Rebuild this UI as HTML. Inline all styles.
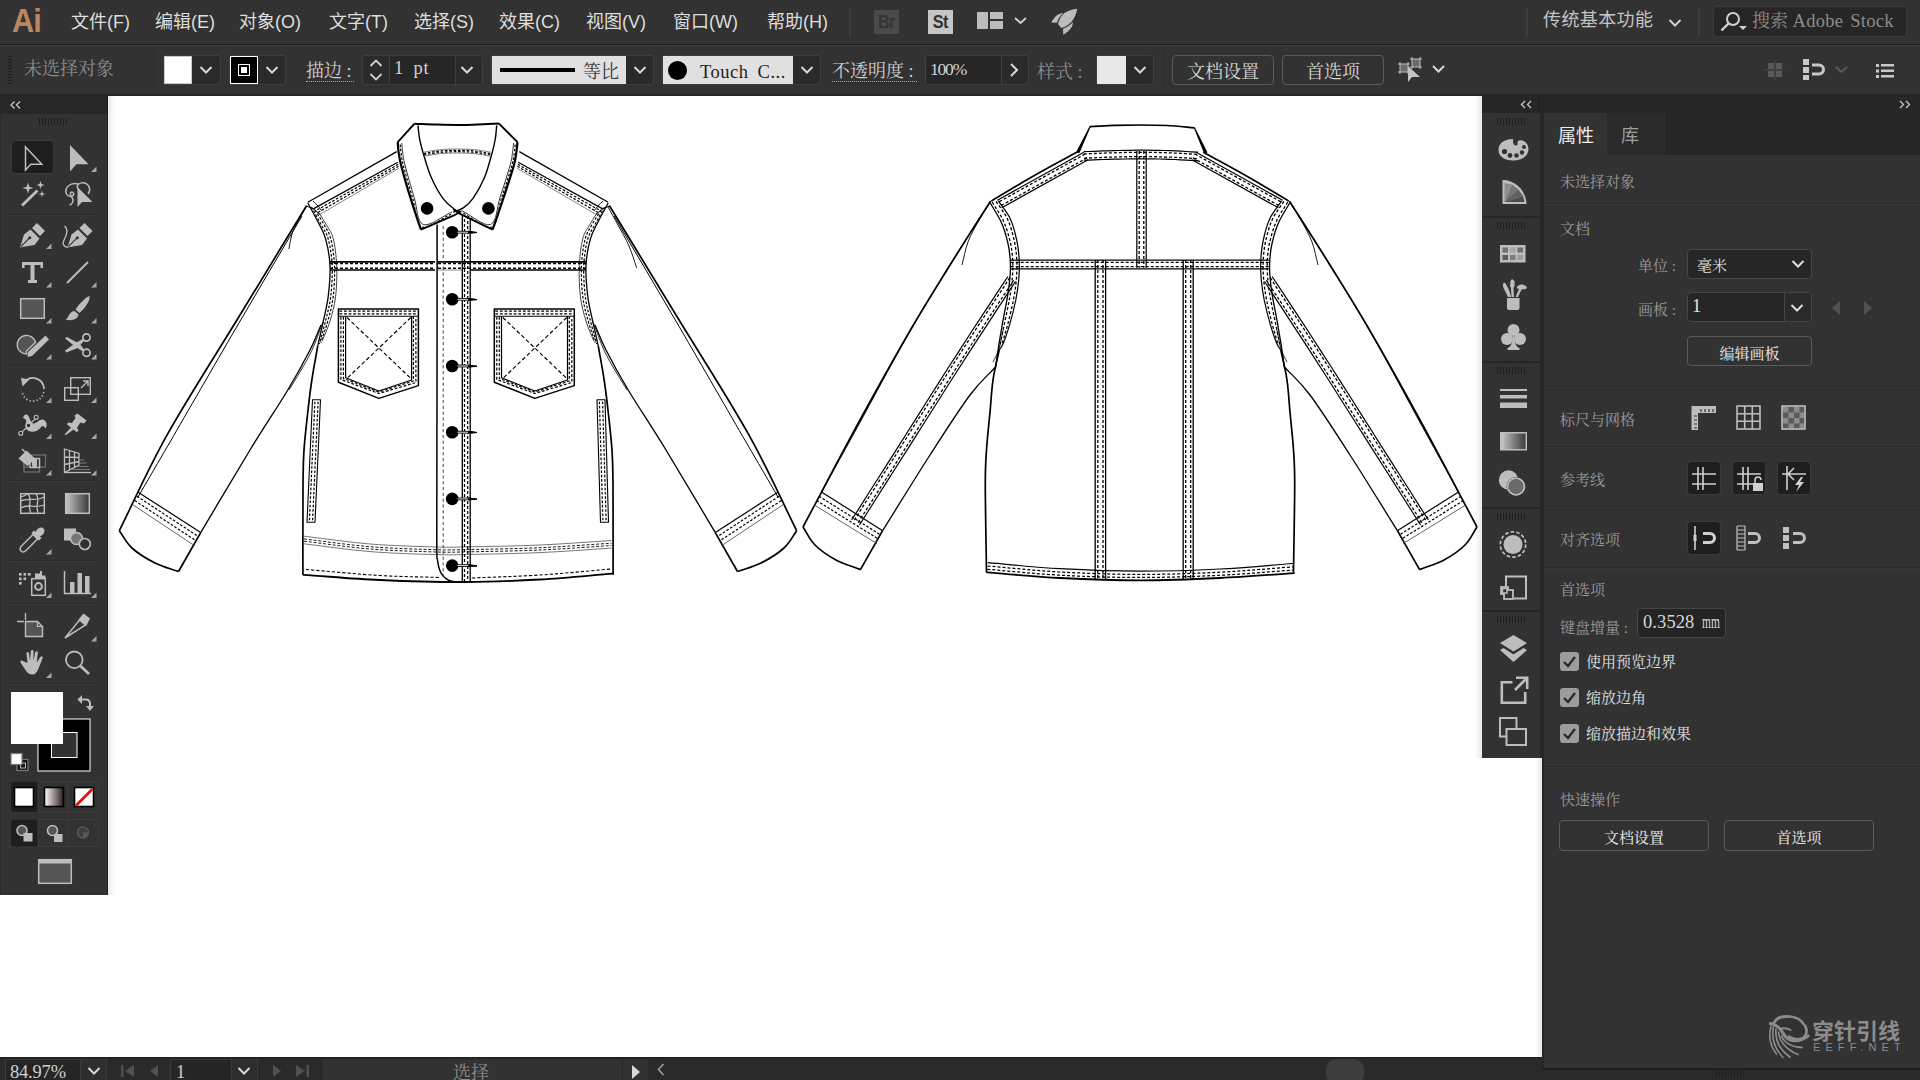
<!DOCTYPE html>
<html lang="zh-CN">
<head>
<meta charset="utf-8">
<title>Adobe Illustrator</title>
<style>
*{box-sizing:border-box;margin:0;padding:0}
html,body{width:1920px;height:1080px;overflow:hidden;background:#fff}
body{position:relative;font-family:"Liberation Sans","Noto Sans CJK SC",sans-serif;color:#d0d0d0}
.abs{position:absolute}
.sans{font-family:"Liberation Sans","Noto Sans CJK SC",sans-serif}
.song{font-family:"Liberation Serif","Noto Serif CJK SC",serif;font-weight:400}
.mono{font-family:"Liberation Serif","Noto Serif CJK SC",serif;font-size:18.5px !important}
svg{position:absolute;overflow:visible}
/* ---------- menu bar ---------- */
#menubar{left:0;top:0;width:1920px;height:45px;background:#323232;border-bottom:1px solid #1f1f1f}
#menubar .mi{position:absolute;top:9px;font-size:18px;line-height:26px;color:#dedede;white-space:nowrap;letter-spacing:0}
#ailogo{left:12px;top:1px;font-size:33px;line-height:40px;font-weight:bold;color:#b98562;letter-spacing:-1px;transform:scaleX(.93);transform-origin:0 0}
.vsep{position:absolute;width:2px;background:#3d3d3d}
.appbtn{position:absolute;top:10px;width:25px;height:24px;font-size:18px;line-height:25px;text-align:center;font-weight:bold;letter-spacing:-.6px}.appbtn span{display:inline-block;transform:scaleX(.9)}
/* ---------- control bar ---------- */
#ctrlbar{left:0;top:45px;width:1920px;height:51px;background:#323232;border-top:1px solid #3a3a3a;border-bottom:2px solid #252525}
.ctl{position:absolute;font-size:18px;line-height:22px;white-space:nowrap}
.dd{position:absolute;background:#2a2a2a;border:1px solid #3e3e3e;border-radius:3px}
.field{position:absolute;background:#262626;border:1px solid #3e3e3e;border-radius:3px}
.btn{position:absolute;border:1px solid #5c5c5c;border-radius:4px;text-align:center;color:#d6d6d6;white-space:nowrap}
.dot{border-bottom:1px dotted #aaa}
/* ---------- panels ---------- */
#tools{left:0;top:95px;width:108px;height:800px;background:#323232;border-left:1px solid #2a2a2a;border-right:1px solid #202020}
#toolshead{left:0;top:95px;width:107px;height:18.500px;background:#272727}
.tsep{position:absolute;left:9px;width:91px;height:1px;background:#2a2a2a;border-bottom:1px solid #383838;height:2px}
#dockhead{left:1482px;top:95px;width:438px;height:18.500px;background:#262626}
#dock{left:1482px;top:113px;width:60px;height:645px;background:#323232;border-right:2px solid #262626}
.dsep{position:absolute;left:0;width:58px;height:2px;background:#262626}
#props{left:1542px;top:113px;width:378px;height:955px;background:#323232;border-left:2px solid #262626}
#tabbar{left:1544px;top:113px;width:376px;height:42px;background:#262626}
.psep{position:absolute;left:1544px;width:376px;height:2px;background:#2c2c2c;border-bottom:1px solid #363636}
.plabel{position:absolute;margin-top:1px;font-size:15px;line-height:20px;color:#9a9a9a;white-space:nowrap}
.cb{position:absolute;left:1560px;width:19px;height:19px;background:#9c9c9c;border-radius:3px}
.cblabel{position:absolute;margin-top:1px;left:1586px;font-size:15px;line-height:20px;color:#e2e2e2;white-space:nowrap}
.ibtn{position:absolute;width:34px;height:34px;background:#1e1e1e;border:1px solid #3a3a3a;border-radius:4px}
/* ---------- status bar ---------- */
#status{left:0;top:1057px;width:1542px;height:23px;background:#2a2a2a;border-top:2px solid #222}
#propfoot{left:1542px;top:1068px;width:378px;height:12px;background:#2a2a2a;border-top:2px solid #1e1e1e}
.grip{position:absolute;height:7px;background:repeating-linear-gradient(90deg,#1e1e1e 0,#1e1e1e 1px,transparent 1px,transparent 3px)}
</style>
</head>
<body>
<!-- ================= MENU BAR ================= -->
<div id="menubar" class="abs">
  <div id="ailogo" class="abs sans">Ai</div>
  <div class="mi" style="left:71px">文件(F)</div>
  <div class="mi" style="left:155px">编辑(E)</div>
  <div class="mi" style="left:239px">对象(O)</div>
  <div class="mi" style="left:329px">文字(T)</div>
  <div class="mi" style="left:414px">选择(S)</div>
  <div class="mi" style="left:499px">效果(C)</div>
  <div class="mi" style="left:586px">视图(V)</div>
  <div class="mi" style="left:673px">窗口(W)</div>
  <div class="mi" style="left:767px">帮助(H)</div>
  <div class="vsep" style="left:849px;top:8px;height:29px"></div>
  <div class="appbtn" style="left:874px;background:#4a4a4a;color:#353535"><span>Br</span></div>
  <div class="appbtn" style="left:928px;background:#c6c6c6;color:#333"><span>St</span></div>
  <div class="vsep" style="left:1526px;top:8px;height:29px"></div>
  <div class="mi" style="left:1543px;top:7px;color:#c4c4c4;letter-spacing:.4px">传统基本功能</div>
  <div class="vsep" style="left:1698px;top:8px;height:29px"></div>
  <div class="field" style="left:1713px;top:6px;width:194px;height:31px;border-radius:4px;background:#262626;border-color:#3c3c3c"></div>
  <div class="abs song" style="left:1752px;top:9px;font-size:18px;line-height:24px;color:#8c8c8c;white-space:nowrap">搜索 <span class="mono" style="letter-spacing:.3px;word-spacing:2px">Adobe Stock</span></div>
</div>
<!-- ================= CONTROL BAR ================= -->
<div id="ctrlbar" class="abs"></div>
<!-- control bar content -->
<div class="abs" style="left:8px;top:56px;width:4px;height:28px;background:repeating-linear-gradient(180deg,#1e1e1e 0,#1e1e1e 1px,transparent 1px,transparent 3px)"></div>
<div class="ctl song" style="left:24px;top:58px;color:#8c8c8c">未选择对象</div>
<div class="vsep" style="left:153px;top:51px;height:38px;background:#2b2b2b;width:1px"></div>
<!-- fill swatch -->
<div class="dd" style="left:163px;top:55px;width:58px;height:30px"></div>
<div class="abs" style="left:164px;top:56px;width:28px;height:28px;background:#fff;border:1px solid #c8c8c8"></div>
<svg style="left:199px;top:65px" width="14" height="10"><path d="M1.5 2 L7 7.5 L12.5 2" fill="none" stroke="#d8d8d8" stroke-width="2"/></svg>
<!-- stroke swatch -->
<div class="dd" style="left:229px;top:55px;width:57px;height:30px"></div>
<div class="abs" style="left:230px;top:56px;width:28px;height:28px;background:#000;border:1px solid #fff"></div>
<div class="abs" style="left:238px;top:64px;width:12px;height:12px;border:1px solid #fff;background:#000"></div>
<div class="abs" style="left:241px;top:67px;width:6px;height:6px;background:#fff"></div>
<svg style="left:265px;top:65px" width="14" height="10"><path d="M1.5 2 L7 7.5 L12.5 2" fill="none" stroke="#d8d8d8" stroke-width="2"/></svg>
<div class="ctl song dot" style="left:306px;top:60px;color:#cfcfcf;height:22px;width:48px">描边 :</div>
<!-- stroke weight -->
<div class="field" style="left:362px;top:55px;width:121px;height:30px;background:#2a2a2a"></div>
<div class="abs" style="left:389px;top:56px;width:67px;height:28px;background:#262626;border-left:1px solid #3e3e3e;border-right:1px solid #3e3e3e"></div>
<svg style="left:368px;top:58px" width="16" height="24"><path d="M2.5 8 L8 2.5 L13.5 8 M2.5 16 L8 21.5 L13.5 16" fill="none" stroke="#d0d0d0" stroke-width="1.8"/></svg>
<div class="ctl mono" style="left:394px;top:57px;color:#d4d4d4;letter-spacing:.8px;word-spacing:4px">1 pt</div>
<svg style="left:460px;top:65px" width="14" height="10"><path d="M1.5 2 L7 7.5 L12.5 2" fill="none" stroke="#d8d8d8" stroke-width="2"/></svg>
<!-- profile -->
<div class="dd" style="left:491px;top:55px;width:163px;height:30px"></div>
<div class="abs" style="left:492px;top:56px;width:134px;height:28px;background:#e0e0e0"></div>
<div class="abs" style="left:500px;top:68px;width:75px;height:4px;background:#000"></div>
<div class="ctl song" style="left:583px;top:61px;color:#333">等比</div>
<svg style="left:633px;top:65px" width="14" height="10"><path d="M1.5 2 L7 7.5 L12.5 2" fill="none" stroke="#d8d8d8" stroke-width="2"/></svg>
<!-- brush -->
<div class="dd" style="left:662px;top:55px;width:159px;height:30px"></div>
<div class="abs" style="left:663px;top:56px;width:130px;height:28px;background:#e0e0e0"></div>
<div class="abs" style="left:668px;top:61px;width:19px;height:19px;background:#000;border-radius:50%"></div>
<div class="ctl mono" style="left:700px;top:61px;color:#222;letter-spacing:.5px;word-spacing:4px">Touch C...</div>
<svg style="left:800px;top:65px" width="14" height="10"><path d="M1.5 2 L7 7.5 L12.5 2" fill="none" stroke="#d8d8d8" stroke-width="2"/></svg>
<div class="ctl song dot" style="left:832px;top:60px;color:#cfcfcf;height:22px;width:85px">不透明度 :</div>
<!-- opacity -->
<div class="field" style="left:925px;top:55px;width:104px;height:30px;background:#2a2a2a"></div>
<div class="abs" style="left:926px;top:56px;width:76px;height:28px;background:#262626;border-right:1px solid #3e3e3e"></div>
<div class="ctl mono" style="left:930px;top:58px;color:#d4d4d4;letter-spacing:-1.2px;font-size:17.5px !important">100%</div>
<svg style="left:1009px;top:62px" width="10" height="16"><path d="M2 2 L8 8 L2 14" fill="none" stroke="#d8d8d8" stroke-width="2"/></svg>
<div class="ctl song" style="left:1037px;top:61px;color:#8c8c8c">样式 :</div>
<div class="dd" style="left:1096px;top:55px;width:58px;height:30px"></div>
<div class="abs" style="left:1097px;top:56px;width:29px;height:28px;background:#e8e8e8"></div>
<svg style="left:1133px;top:65px" width="14" height="10"><path d="M1.5 2 L7 7.5 L12.5 2" fill="none" stroke="#d8d8d8" stroke-width="2"/></svg>
<div class="vsep" style="left:1163px;top:51px;height:38px;background:#2b2b2b;width:1px"></div>
<div class="btn song" style="left:1172px;top:55px;width:102px;height:30px;font-size:18px;line-height:28px;padding-top:2px">文档设置</div>
<div class="btn song" style="left:1282px;top:55px;width:102px;height:30px;font-size:18px;line-height:28px;padding-top:2px">首选项</div>
<!-- transform icon -->
<svg style="left:1397px;top:57px" width="50" height="26">
  <rect x="3" y="7" width="8" height="8" fill="#6a6a6a" stroke="#bdbdbd" stroke-width="1"/>
  <path d="M1 7h2M11 7h2M1 15h2M11 15h2M3 5v2M11 5v2M3 15v2M11 15v2" stroke="#bdbdbd" stroke-width="1"/>
  <rect x="15" y="2" width="8" height="8" fill="#6a6a6a" stroke="#bdbdbd" stroke-width="1"/>
  <path d="M13 2h2M23 2h2M13 10h2M23 10h2M15 0v2M23 0v2M15 10v2M23 10v2" stroke="#bdbdbd" stroke-width="1"/>
  <path d="M11 9 L11 25 L15 20 L23 20 Z" fill="#c4c4c4"/>
  <path d="M36 9 L41.5 14.5 L47 9" fill="none" stroke="#d8d8d8" stroke-width="2"/>
</svg>
<!-- right-side icons -->
<svg style="left:1765px;top:60px" width="20" height="20">
  <g fill="#5a5a5a"><rect x="3" y="3" width="6" height="6"/><rect x="11" y="3" width="6" height="6"/><rect x="3" y="11" width="6" height="6"/><rect x="11" y="11" width="6" height="6"/></g>
  <path d="M0 10h20M10 0v20" stroke="#4a4a4a" stroke-width="1"/>
</svg>
<svg style="left:1803px;top:58px" width="48" height="24">
  <g fill="#c8c8c8"><rect x="0" y="1" width="6" height="6"/><rect x="0" y="9" width="6" height="6"/><rect x="0" y="17" width="6" height="5"/></g>
  <path d="M9 7 h7 a4.5 4.5 0 0 1 0 9 h-7" fill="none" stroke="#c8c8c8" stroke-width="3"/>
  <path d="M33 9 L38.5 14 L44 9" fill="none" stroke="#5a5a5a" stroke-width="2"/>
</svg>
<svg style="left:1876px;top:63px" width="20" height="16">
  <g fill="#c8c8c8"><rect x="0" y="1" width="3" height="3"/><rect x="5" y="1" width="13" height="2.5"/><rect x="0" y="6.5" width="3" height="3"/><rect x="5" y="6.5" width="13" height="2.5"/><rect x="0" y="12" width="3" height="3"/><rect x="5" y="12" width="13" height="2.5"/></g>
</svg>
<!-- menubar extra icons -->
<svg style="left:977px;top:12px" width="54" height="20">
  <g fill="#bcbcbc"><rect x="0" y="0" width="11" height="17"/><rect x="13" y="0" width="13" height="7"/><rect x="13" y="9" width="13" height="8"/></g>
  <path d="M38 6 L43.5 11 L49 6" fill="none" stroke="#d0d0d0" stroke-width="2"/>
</svg>
<svg style="left:1040px;top:4px" width="50" height="36" viewBox="1040 4 50 36"><g fill="#bcbcbc">
  <path d="M1077.200 8.800 C1071 9.500 1066 11.500 1063.300 14 C1060.500 17 1058.800 20.500 1058 24 L1061.300 28 C1065.500 27 1069.300 24.500 1072 21.300 C1074.800 17.500 1076.500 13 1077.200 8.800 Z"/>
  <path d="M1051.300 22.500 C1052.800 19.500 1054.800 17 1057.300 15 C1059 13.800 1061.500 13.200 1063.200 13.300 C1060 15.500 1058 19 1057 22.700 Z"/>
  <path d="M1063.300 34.700 L1063 28.800 C1067 27.500 1070.300 25 1072.800 22 C1073 24.300 1072.300 26.300 1071 28 C1069 30.800 1066.300 33 1063.300 34.700 Z"/>
</g></svg>
<svg style="left:1668px;top:18px" width="14" height="10"><path d="M1.5 2 L7 7.5 L12.5 2" fill="none" stroke="#d0d0d0" stroke-width="2"/></svg>
<svg style="left:1720px;top:10px" width="28" height="24">
  <circle cx="13" cy="9" r="6" fill="none" stroke="#d0d0d0" stroke-width="2"/>
  <path d="M8.5 13.5 L1.5 20.5" stroke="#d0d0d0" stroke-width="2.4"/>
  <path d="M19 16 h8 l-4 4 z" fill="#d0d0d0"/>
</svg>

<!-- ================= TOOLS ================= -->
<div id="tools" class="abs"></div>
<div id="toolshead" class="abs"></div>
<svg style="left:10px;top:101px" width="12" height="8"><path d="M4.500 .5 L1 4 L4.500 7.500 M10 .5 L6.500 4 L10 7.500" fill="none" stroke="#c8c8c8" stroke-width="1.300"/></svg>
<div class="grip" style="left:39px;top:118px;width:29px"></div>
<div class="abs" style="left:10.500px;top:139.500px;width:43px;height:34.500px;background:#1e1e1e;border:1px solid #3a3a3a;border-radius:4px"></div>
<div class="tsep" style="top:214px"></div>
<div class="tsep" style="top:365px"></div>
<div class="tsep" style="top:480px"></div>
<div class="tsep" style="top:560px"></div>
<div class="tsep" style="top:603px"></div>
<div class="tsep" style="top:683px"></div>
<svg style="left:0;top:95px" width="108" height="800" viewBox="0 95 108 800">
<defs>
 <linearGradient id="tg1" x1="0" x2="1"><stop offset="0" stop-color="#c4c4c4"/><stop offset="1" stop-color="#3a3a3a"/></linearGradient>
 <linearGradient id="tg2" x1="0" x2="1"><stop offset="0" stop-color="#fff"/><stop offset="1" stop-color="#2a1e1c"/></linearGradient>
 <path id="tri" d="M5.500 0 V5.500 H0 Z"/>
</defs>
<g fill="#bdbdbd">
<!-- corner triangles -->
<g fill="#a6a6a6">
<use href="#tri" x="91" y="166.500"/>
<use href="#tri" x="46" y="243.500"/>
<use href="#tri" x="46" y="282"/><use href="#tri" x="91" y="282"/>
<use href="#tri" x="46" y="318"/><use href="#tri" x="91" y="318"/>
<use href="#tri" x="46" y="354"/><use href="#tri" x="91" y="354"/>
<use href="#tri" x="46" y="397.500"/><use href="#tri" x="91" y="397.500"/>
<use href="#tri" x="46" y="433.500"/><use href="#tri" x="91" y="433.500"/>
<use href="#tri" x="46" y="470"/><use href="#tri" x="91" y="470"/>
<use href="#tri" x="46" y="549"/>
<use href="#tri" x="46" y="592.500"/><use href="#tri" x="91" y="592.500"/>
<use href="#tri" x="91" y="636"/>
<use href="#tri" x="46" y="672.500"/>
</g>
<!-- selection -->
<path d="M25.500 147 V170 L30.700 164.300 H41.800 Z" fill="none" stroke="#bdbdbd" stroke-width="1.500" stroke-linejoin="miter"/>
<!-- direct selection -->
<path d="M70 145 V171.500 L76.500 164.300 H88.500 Z"/>
<!-- magic wand -->
<path d="M21 204.500 L23 206.500 L38.500 191.500 L36.500 189.500 Z"/>
<path d="M28 182.500 L29.300 186.700 L33.500 188 L29.300 189.300 L28 193.500 L26.700 189.300 L22.500 188 L26.700 186.700 Z"/>
<path d="M40.500 181 L41.500 184 L44.500 185 L41.500 186 L40.500 189 L39.500 186 L36.500 185 L39.500 184 Z"/>
<path d="M42 190.500 L42.800 193.200 L45.500 194 L42.800 194.800 L42 197.500 L41.200 194.800 L38.500 194 L41.200 193.200 Z"/>
<!-- lasso -->
<path d="M78 189 C74 182 88 180 89.500 188 C90 191 89 193 88 194 M78 184 C70 182 64 188 66.500 194 C68 197 72 197 73.500 195 C74.500 193 72 191 70.500 193 C69 196 73 197 73 200 C73 203 71 205 69.500 205" fill="none" stroke="#bdbdbd" stroke-width="1.500"/>
<path d="M77.500 187 V207 L82 202 H92.500 Z"/>
<!-- pen -->
<path d="M20 247.500 L24 234.500 L30.500 229.500 L39.500 238.500 L34.500 245 Z M21.500 246 L29 238.500" />
<path d="M20.800 246.700 L29.300 238.200" stroke="#323232" stroke-width="1.200"/>
<circle cx="29.800" cy="237.700" r="1.500" fill="#323232"/>
<path d="M32 228 L37 223 L45 231 L40 236 Z"/>
<!-- curvature -->
<path d="M67.500 247.500 L71.500 234.500 L78 229.500 L87 238.500 L82 245 Z"/>
<path d="M68.300 246.700 L76.800 238.200" stroke="#323232" stroke-width="1.200"/>
<circle cx="77.300" cy="237.700" r="1.500" fill="#323232"/>
<path d="M79.500 228 L84.500 223 L92.500 231 L87.500 236 Z"/>
<path d="M64.500 226 C69 230 66 236 64 240 C62 244 64 247.500 68 247" fill="none" stroke="#bdbdbd" stroke-width="1.400"/>
<!-- type -->
<path d="M22 262 H43 V268 H40.500 V265 H34.500 V280 H37 V283 H28 V280 H30.500 V265 H24.500 V268 H22 Z"/>
<!-- line -->
<path d="M67 283 L88 262" stroke="#bdbdbd" stroke-width="2" fill="none"/>
<!-- rectangle -->
<rect x="20.700" y="298.700" width="23.600" height="19.600" fill="#555" stroke="#bdbdbd" stroke-width="1.500"/>
<!-- brush -->
<path d="M75.500 309.500 C80 303 85.500 297.500 89.500 296 C90.500 300 86 307 79.500 313 Z"/>
<path d="M74.500 311 L78.500 314.500 C78 319 72 321.500 65.500 319.500 C69 318 68.500 312 74.500 311 Z"/>
<!-- shaper -->
<path d="M26.500 354 A9.300 9.300 0 1 1 35.500 342.500 L26.500 351 Z" fill="#555" stroke="#bdbdbd" stroke-width="1.400"/>
<path d="M28 352 L45.500 335.500 L49 339.500 L32 356 L27.500 357 Z"/>
<!-- scissors -->
<circle cx="86.500" cy="337.500" r="3.600" fill="none" stroke="#bdbdbd" stroke-width="1.700"/>
<circle cx="86.500" cy="352.800" r="3.600" fill="none" stroke="#bdbdbd" stroke-width="1.700"/>
<path d="M64.800 338.300 L67 337 L79.500 343.800 L84.300 349.800 L82.600 351.300 L76 347.300 Z"/><path d="M64.800 350.800 L66.500 352.600 L77.500 348 L84.300 340.600 L82.600 339 L75 343.600 Z"/>
<!-- rotate -->
<path d="M25 381.500 A11 11 0 0 1 44 389" fill="none" stroke="#bdbdbd" stroke-width="1.800"/>
<path d="M21 378 L29.500 379.500 L22.500 386.500 Z"/>
<path d="M43.800 392 A11 11 0 0 1 22 391" fill="none" stroke="#bdbdbd" stroke-width="1.700" stroke-dasharray="1.300 2.200"/>
<!-- scale -->
<rect x="70.700" y="377.700" width="19.600" height="16.600" fill="none" stroke="#bdbdbd" stroke-width="1.400"/>
<rect x="64.700" y="387.700" width="13.600" height="12.600" fill="none" stroke="#bdbdbd" stroke-width="1.400"/>
<path d="M81 388 L87.500 381.500 M83 381 H88 V386" fill="none" stroke="#bdbdbd" stroke-width="1.400"/>
<!-- width -->
<path d="M23 418 C24 414 27 413.500 28.500 416 C30.500 420 31 424 34 423.500 C38 422.500 40 418 44 420 C47.500 422 47 427 45.500 428.500 C44.500 426.500 43 425 41.500 426.500 C39 429.500 36.500 432.500 30.500 431.500 C25.500 430.500 24.500 426 26 423 C27 420.500 25.500 418.500 23 418 Z"/>
<path d="M21 433 L36 418" stroke="#bdbdbd" stroke-width="1.100"/>
<circle cx="20.800" cy="433.200" r="2" fill="#323232" stroke="#bdbdbd" stroke-width="1.100"/>
<circle cx="36.200" cy="417.300" r="2" fill="#323232" stroke="#bdbdbd" stroke-width="1.100"/>
<circle cx="28.500" cy="425.500" r="2.300" fill="#323232" stroke="#bdbdbd" stroke-width="1.100"/>
<!-- pin -->
<path d="M77.500 413.500 L86.500 420.500 L84 423.500 L80.500 422.500 L77 427.500 L78.500 431 L76.500 432 L67 424.500 L68 422.500 L72 423 L75.500 418 L74.500 415.500 Z"/>
<path d="M71 427.500 L73.500 429.500 L66 435 L64.500 434.500 Z"/>
<!-- shape builder -->
<rect x="24" y="455" width="21.500" height="12" fill="none" stroke="#6e6e6e" stroke-width="1.300"/>
<rect x="24" y="462" width="15.500" height="10" fill="none" stroke="#6e6e6e" stroke-width="1.300"/>
<rect x="30" y="458.500" width="9.500" height="9" fill="#323232" stroke="#bdbdbd" stroke-width="1.500"/>
<path d="M18.500 458.500 L26.500 450.500 L35.500 459 L27.500 466 Z"/>
<path d="M21.500 449.500 L22.500 448.500 L27 453 L26 454 Z"/>
<path d="M32 459 h5 v6 a2.500 2.500 0 0 1 -5 0 Z"/>
<!-- perspective grid -->
<path d="M64.500 449 L79 453.500 V465 L64.500 472.500 Z M69.500 450.500 L69.500 470 M74.500 452 L74.500 467.500 M64.500 457 L79 457.500 M64.500 464.500 L79 461.500" fill="none" stroke="#bdbdbd" stroke-width="1.300"/>
<path d="M64.500 472.500 H91" stroke="#bdbdbd" stroke-width="1.300"/>
<path d="M79 460 H84 M79 463 H86.500 M77 466.500 H88.500 M72 469.500 H90" stroke="#7a7a7a" stroke-width="1.100"/>
<!-- mesh -->
<rect x="20.700" y="493.700" width="23.600" height="19.600" fill="none" stroke="#bdbdbd" stroke-width="1.500"/>
<path d="M21 501 C28 497 36 502 44 497 M21 508 C28 503 34 509 44 505 M28 494 C33 499 27 507 31 513 M36 494 C41 500 34 506 38.500 513 M21 497 C24 496 26 495 27 494" fill="none" stroke="#bdbdbd" stroke-width="1.300"/>
<!-- gradient -->
<rect x="65.700" y="493.700" width="23.600" height="19.600" fill="url(#tg1)" stroke="#bdbdbd" stroke-width="1.500"/>
<!-- eyedropper -->
<path d="M21.500 551.500 C19.500 549.500 20 547.500 21.500 546 L33 534.500 L37.500 539 L26 550.500 C24.500 552 23 552.500 21.500 551.500 Z" fill="none" stroke="#bdbdbd" stroke-width="1.500"/>
<path d="M31.500 533 L34 530.500 L35.500 532 C37 528.500 41 526 43.500 528.500 C46 531 43.500 535 40 536.500 L41.500 538 L39 540.500 Z"/>
<!-- blend -->
<rect x="64" y="528.500" width="12" height="12"/>
<circle cx="76.500" cy="538.500" r="6" fill="#777" stroke="#bdbdbd" stroke-width="1.600"/>
<circle cx="84.800" cy="544" r="5.500" fill="#323232" stroke="#bdbdbd" stroke-width="1.600"/>
<!-- symbol sprayer -->
<g><rect x="19" y="573" width="2.600" height="2.600"/><rect x="23.500" y="573" width="2.600" height="2.600"/><rect x="28" y="573" width="2.600" height="2.600"/><rect x="19" y="577.500" width="2.600" height="2.600"/><rect x="23.500" y="577.500" width="2.600" height="2.600"/><rect x="19" y="582" width="2.600" height="2.600"/></g>
<path d="M35 573.500 h5 v-2.500 h2 v4.500 h3.500 v3 h-10.500 Z"/>
<rect x="31.700" y="578.700" width="13.600" height="16.600" fill="none" stroke="#bdbdbd" stroke-width="1.500"/>
<circle cx="38.500" cy="586.500" r="3.400" fill="none" stroke="#bdbdbd" stroke-width="2"/>
<!-- graph -->
<path d="M64.500 571 V593.500 H91" fill="none" stroke="#bdbdbd" stroke-width="1.500"/>
<rect x="70" y="582" width="4.500" height="11"/><rect x="77.500" y="573" width="4.500" height="20"/><rect x="85" y="576" width="4.500" height="17"/>
<!-- artboard -->
<path d="M25.500 621.500 H37.500 L42.500 626.500 V636.500 H25.500 Z" fill="#555" stroke="#bdbdbd" stroke-width="1.400"/>
<path d="M37.500 621.500 V626.500 H42.500" fill="none" stroke="#bdbdbd" stroke-width="1.200"/>
<path d="M25.500 613 V620 M17 621.500 H24" stroke="#bdbdbd" stroke-width="1.300"/>
<!-- slice -->
<path d="M65 638 L79.500 620 L85.500 625 Z" fill="none" stroke="#bdbdbd" stroke-width="1.500" stroke-linejoin="miter"/>
<path d="M78.500 619.500 L83.500 613.500 L90 618.500 L86.500 625.500 Z"/>
<!-- hand -->
<path d="M27.500 663 L26.500 653.500 C26.500 651.500 28.800 651.500 29 653.500 L30 661 L30.800 651.500 C31 649.500 33.500 649.500 33.500 651.500 L33.500 661 L35.200 652.500 C35.700 650.500 38 651 37.800 653 L36.800 662.500 L40.300 657 C41.300 655.500 43.500 656.500 42.500 658.500 L38.500 668.500 C37 672.500 35 674.500 32.500 674.500 C29 674.500 27 672.500 25.500 670 L20.500 662.500 C19.800 661 21.500 659.800 22.800 661 Z"/>
<!-- zoom -->
<circle cx="74.300" cy="659.800" r="8.300" fill="none" stroke="#bdbdbd" stroke-width="1.800"/>
<path d="M80.500 666 L89 674" stroke="#bdbdbd" stroke-width="2.800" fill="none"/>
</g>
<!-- fill / stroke -->
<rect x="38" y="719" width="52" height="52" fill="#000" stroke="#fff" stroke-width="1"/>
<rect x="51.500" y="732.500" width="25.500" height="25" fill="#323232" stroke="#fff" stroke-width="1"/>
<rect x="11" y="692" width="52" height="52" fill="#fff"/>
<!-- swap -->
<path d="M81 699.500 H86 C89 699.500 90 701 90 704 V706" fill="none" stroke="#bdbdbd" stroke-width="2"/>
<path d="M77.500 699.500 L82 695 V704 Z M90 711 L86 706 H94 Z" fill="#bdbdbd"/>
<!-- default -->
<rect x="17" y="759.500" width="11" height="11" fill="#111" stroke="#7a7a7a" stroke-width="1.200"/>
<rect x="20.500" y="763" width="5" height="5" fill="none" stroke="#bdbdbd" stroke-width="1"/>
<rect x="11" y="753.500" width="11" height="11" fill="#fff" stroke="#7a7a7a" stroke-width="1.200"/>
<!-- color / gradient / none -->
<rect x="11" y="781.500" width="87" height="30.500" rx="3" fill="#323232" stroke="#3c3c3c"/>
<path d="M11 784.500 a3 3 0 0 1 3 -3 H38 V812 H14 a3 3 0 0 1 -3 -3 Z" fill="#1e1e1e"/>
<path d="M38 781.500 V812 M68 781.500 V812" stroke="#3c3c3c"/>
<rect x="14.500" y="787.500" width="19" height="19" fill="#fff" stroke="#000" stroke-width="1.600"/>
<rect x="44.500" y="787.500" width="19" height="19" fill="url(#tg2)" stroke="#000" stroke-width="1.600"/>
<rect x="74.500" y="787.500" width="19" height="19" fill="#fff" stroke="#000" stroke-width="1.600"/>
<path d="M76 805.500 L92.500 789" stroke="#e01010" stroke-width="2.600"/>
<!-- drawing modes -->
<rect x="11" y="819.500" width="87" height="27" rx="3" fill="#323232" stroke="#3c3c3c"/>
<path d="M11 822.500 a3 3 0 0 1 3 -3 H38 V846.500 H14 a3 3 0 0 1 -3 -3 Z" fill="#1e1e1e"/>
<path d="M38 819.500 V846.500 M68 819.500 V846.500" stroke="#3c3c3c"/>
<circle cx="22" cy="830.500" r="5" fill="#555" stroke="#bdbdbd" stroke-width="1.600"/>
<rect x="23.500" y="833" width="9" height="8.500" fill="#bdbdbd"/>
<rect x="54" y="834" width="8.500" height="8" fill="#bdbdbd"/>
<circle cx="52.500" cy="830.500" r="5" fill="#555" stroke="#bdbdbd" stroke-width="1.600"/>
<circle cx="83" cy="832.500" r="5.500" fill="#3e3e3e" stroke="#5a5a5a" stroke-width="1.400"/>
<path d="M83 832.500 h5 a5 5 0 0 1 -5 5 Z" fill="#5a5a5a"/>
<!-- screen mode -->
<rect x="38.700" y="859.700" width="32.600" height="23.600" fill="#555" stroke="#bdbdbd" stroke-width="1.500"/>
<rect x="38" y="859" width="34" height="4.500" fill="#bdbdbd"/>
</svg>

<!-- ================= DOCK + PROPERTIES ================= -->
<div id="dockhead" class="abs"></div>
<div id="dock" class="abs"></div>
<div id="props" class="abs"></div>
<div id="tabbar" class="abs"></div>
<!-- dock/prop headers -->
<svg style="left:1520px;top:100px" width="14" height="9"><path d="M5 1 L1.5 4.5 L5 8 M11 1 L7.5 4.5 L11 8" fill="none" stroke="#c8c8c8" stroke-width="1.3"/></svg>
<svg style="left:1898px;top:100px" width="14" height="9"><path d="M2 1 L5.5 4.5 L2 8 M8 1 L11.5 4.5 L8 8" fill="none" stroke="#c8c8c8" stroke-width="1.3"/></svg>
<div class="abs" style="left:1539px;top:95px;width:1px;height:18px;background:#1c1c1c"></div>
<!-- dock grips & separators -->
<div class="grip" style="left:1497px;top:118px;width:29px"></div>
<div class="abs dsep" style="left:1482px;top:216px"></div>
<div class="grip" style="left:1497px;top:222px;width:29px"></div>
<div class="abs dsep" style="left:1482px;top:361px"></div>
<div class="grip" style="left:1497px;top:367px;width:29px"></div>
<div class="abs dsep" style="left:1482px;top:507px"></div>
<div class="grip" style="left:1497px;top:513px;width:29px"></div>
<div class="abs dsep" style="left:1482px;top:610px"></div>
<div class="grip" style="left:1497px;top:616px;width:29px"></div>
<svg style="left:1482px;top:113px" width="58" height="645" viewBox="1482 113 58 645">
<g fill="#bdbdbd" stroke="none">
<!-- color palette -->
<path d="M1513 139 C1503 139 1498.500 144 1498.500 150 C1498.500 156 1504 160.500 1513 160.500 C1522 160.500 1528.500 156 1528.500 149 C1528.500 144 1524 139 1519 140.500 C1516 141.500 1519 145 1516 145.500 C1513 146 1513 141 1513 139 Z"/>
<g fill="#323232"><circle cx="1504.500" cy="151.500" r="2.600"/><circle cx="1510" cy="155.500" r="2.400"/><circle cx="1516.500" cy="155.500" r="2.300"/><circle cx="1522" cy="152.500" r="2.200"/><circle cx="1524" cy="147" r="2"/></g>
<!-- color guide -->
<path d="M1502.500 180 C1515 180 1526 190 1526.500 204 L1502.500 204 Z"/>
<path d="M1504.500 183 L1504.500 202 L1512 184.500 Z" fill="#8e8e8e"/><path d="M1504.500 202 L1518 189 L1512 184.500 Z" fill="#777"/><path d="M1504.500 202 L1523 196 L1518 189 Z" fill="#606060"/><path d="M1504.500 202 L1524.500 202 L1523 196 Z" fill="#4c4c4c"/>
<!-- swatches -->
<rect x="1500" y="245" width="25.500" height="17.500"/>
<g><rect x="1502.500" y="247.500" width="5.500" height="5" fill="#6e6e6e"/><rect x="1510" y="247.500" width="5.500" height="5" fill="#a6a6a6"/><rect x="1517.500" y="247.500" width="5.500" height="5" fill="#6e6e6e"/><rect x="1502.500" y="255" width="5.500" height="5" fill="#5c5c5c"/><rect x="1510" y="255" width="5.500" height="5" fill="#7c7c7c"/><rect x="1517.500" y="255" width="5.500" height="5" fill="#9c9c9c"/></g>
<!-- brushes -->
<path d="M1507 298 h12.500 v10 a2 2 0 0 1 -2 2 h-8.500 a2 2 0 0 1 -2 -2 Z"/>
<path d="M1508 297 L1503.500 288 C1502 284 1504 281.500 1505.500 283.500 C1508 287 1510 292 1511 297 Z"/>
<path d="M1511.500 297 L1511 288 L1510 286 L1510.500 281 L1512 279 L1514.500 281 L1514.500 286 L1513.500 288 L1514 297 Z"/>
<path d="M1515.500 297 L1519 289 L1516.500 288 C1518 284 1523 283 1527 287 L1526 289 L1521.500 289.500 L1518 297 Z"/>
<!-- symbols (club) -->
<circle cx="1513.500" cy="330" r="6"/><circle cx="1507" cy="339" r="6"/><circle cx="1520" cy="339" r="6"/>
<path d="M1512.500 336 h2 C1514.500 343 1516 347 1519.500 348 L1519.500 350 L1507.500 350 L1507.500 348 C1511 347 1512.500 343 1512.500 336 Z"/>
<!-- stroke -->
<rect x="1500" y="389" width="27" height="2"/><rect x="1500" y="395" width="27" height="3.500"/><rect x="1500" y="402.500" width="27" height="5.500"/>
<!-- gradient -->
<rect x="1500" y="432" width="27" height="18.500"/>
<!-- transparency -->
<circle cx="1508.500" cy="480" r="9.700"/>
<circle cx="1516" cy="486.500" r="9.500" fill="#323232"/>
<circle cx="1516" cy="486.500" r="8.300" fill="none" stroke="#bdbdbd" stroke-width="2"/>
<path d="M1508.300 489.500 A9.700 9.700 0 0 0 1518 481.500 A7.300 7.300 0 0 0 1508.300 489.500 Z" fill="#777"/>
<circle cx="1516" cy="486.500" r="7.200" fill="#6a6a6a"/>
<!-- appearance -->
<circle cx="1513" cy="544.500" r="9.500"/>
<circle cx="1513" cy="544.500" r="12.700" fill="none" stroke="#bdbdbd" stroke-width="1.700" stroke-dasharray="3.600 2.100"/>
<!-- graphic styles -->
<path d="M1505 575.500 h22 v24 h-13 v-2 h11 v-20 h-18 v9 h-2 Z"/>
<rect x="1501" y="587" width="7" height="7" fill="#323232" stroke="#bdbdbd" stroke-width="1.800"/>
<rect x="1504" y="590" width="9" height="9" fill="#323232" stroke="#bdbdbd" stroke-width="1.800"/>
<rect x="1502.500" y="588.500" width="4.500" height="4.500" fill="#323232" stroke="#bdbdbd" stroke-width="1.500"/>
<!-- layers -->
<path d="M1513.500 635 L1527 643 L1513.500 651.500 L1500 643 Z"/>
<path d="M1500 650 L1503.500 648 L1513.500 654.500 L1523.500 648 L1527 650 L1513.500 662 Z"/>
<!-- asset export -->
<path d="M1500.500 681 h12 v2.600 h-9.400 v17.800 h20.800 v-9.400 h2.600 v12 h-26 Z"/>
<path d="M1516 676.500 h12.500 v12.500 h-2.600 v-8 L1516 691 L1514 689 L1524 679 h-8 Z"/>
<!-- artboards -->
<rect x="1500" y="718" width="16.500" height="18.500" fill="none" stroke="#bdbdbd" stroke-width="2"/>
<rect x="1506.500" y="729" width="19.500" height="16" fill="#323232" stroke="#bdbdbd" stroke-width="2"/>
</g>
<defs><linearGradient id="dkgrad" x1="0" x2="1" y1="0" y2="0"><stop offset="0" stop-color="#c6c6c6"/><stop offset="1" stop-color="#3c3c3c"/></linearGradient></defs>
<rect x="1501.500" y="433.500" width="24" height="15.500" fill="url(#dkgrad)"/>
</svg>

<!-- tabs -->
<div class="abs" style="left:1544px;top:113px;width:63px;height:42px;background:#323232"></div>
<div class="abs" style="left:1607px;top:113px;width:58px;height:42px;background:#2a2a2a;border-right:1px solid #2f2f2f"></div>
<div class="abs sans" style="left:1558px;top:123px;font-size:18px;line-height:26px;color:#ececec">属性</div>
<div class="abs sans" style="left:1621px;top:123px;font-size:18px;line-height:26px;color:#9e9e9e">库</div>
<div class="plabel song" style="left:1560px;top:171px">未选择对象</div>
<div class="abs psep" style="top:203px"></div>
<div class="plabel song" style="left:1560px;top:218px">文档</div>
<div class="plabel song" style="left:1638px;top:255px">单位 :</div>
<div class="field" style="left:1687px;top:249px;width:125px;height:30px;border-radius:4px;border-color:#464646"></div>
<div class="plabel song" style="left:1697px;top:255px;color:#e2e2e2">毫米</div>
<svg style="left:1791px;top:259px" width="14" height="10"><path d="M1.5 2 L7 7.5 L12.5 2" fill="none" stroke="#e0e0e0" stroke-width="2"/></svg>
<div class="plabel song" style="left:1638px;top:299px">画板 :</div>
<div class="field" style="left:1687px;top:292px;width:125px;height:30px;border-radius:4px;border-color:#464646"></div>
<div class="abs" style="left:1784px;top:293px;width:1px;height:28px;background:#464646"></div>
<div class="abs" style="left:1785px;top:293px;width:26px;height:28px;background:#2a2a2a;border-radius:0 3px 3px 0"></div>
<div class="plabel mono" style="left:1692px;top:295px;color:#e2e2e2">1</div>
<svg style="left:1790px;top:303px" width="14" height="10"><path d="M1.5 2 L7 7.5 L12.5 2" fill="none" stroke="#e0e0e0" stroke-width="2"/></svg>
<svg style="left:1830px;top:300px" width="46" height="16"><path d="M10 1 L2 8 L10 15 Z M34 1 L42 8 L34 15 Z" fill="#505050"/></svg>
<div class="btn song" style="left:1687px;top:336px;width:125px;height:30px;font-size:15px;line-height:28px;padding-top:3px;color:#dcdcdc;font-weight:500">编辑画板</div>
<div class="abs psep" style="top:386px"></div>
<div class="plabel song" style="left:1560px;top:409px">标尺与网格</div>
<!-- ruler/grid icons -->
<svg style="left:1691px;top:405px" width="120" height="26">
  <path d="M0.5 1 H25 V8 H7 V25 H0.5 Z" fill="#bdbdbd"/>
  <path d="M10 4v3M14 4v3M18 4v3M22 4v3M3 11h3M3 15h3M3 19h3M3 23h3" stroke="#323232" stroke-width="1.2"/>
  <g fill="none" stroke="#bdbdbd" stroke-width="1.6"><rect x="46" y="1" width="23" height="23"/><path d="M53.7 1v23M61.3 1v23M46 8.7h23M46 16.3h23"/></g>
  <rect x="91" y="1" width="23" height="23" fill="#5a5a5a" stroke="#bdbdbd" stroke-width="1.6"/>
  <g fill="#8c8c8c"><rect x="92" y="2" width="5.5" height="5.5"/><rect x="103" y="2" width="5.5" height="5.5"/><rect x="97.5" y="7.5" width="5.5" height="5.5"/><rect x="108.5" y="7.5" width="4.5" height="5.5"/><rect x="92" y="13" width="5.5" height="5.5"/><rect x="103" y="13" width="5.5" height="5.5"/><rect x="97.5" y="18.5" width="5.5" height="4.5"/><rect x="108.5" y="18.5" width="4.5" height="4.5"/></g>
</svg>
<div class="abs psep" style="top:446px"></div>
<div class="plabel song" style="left:1560px;top:469px">参考线</div>
<div class="ibtn" style="left:1687px;top:461px"></div>
<div class="ibtn" style="left:1732px;top:461px"></div>
<div class="ibtn" style="left:1777px;top:461px"></div>
<svg style="left:1687px;top:461px" width="125" height="34">
  <g stroke="#d0d0d0" stroke-width="1.6" fill="none"><path d="M11 6v23M16 6v23M5 13h24M5 23h24"/>
  <path d="M56 6v23M61 6v23M50 13h24M50 23h20"/>
  <path d="M100 5v24M95 13h24M107 7l-6 6l6 6"/></g>
  <rect x="66" y="22" width="10" height="8" fill="#d0d0d0"/><path d="M68 22v-3a3 3 0 0 1 6 0" fill="none" stroke="#d0d0d0" stroke-width="1.5"/>
  <path d="M114 16 l-6 8 h4 l-3 7 l8 -10 h-4 l3 -5 z" fill="#d0d0d0"/>
</svg>
<div class="abs psep" style="top:506px"></div>
<div class="plabel song" style="left:1560px;top:529px">对齐选项</div>
<div class="ibtn" style="left:1687px;top:521px"></div>
<svg style="left:1687px;top:521px" width="125" height="34">
  <g stroke="#d0d0d0" fill="none"><path d="M8 5v24" stroke-width="1.6"/><rect x="6.5" y="14" width="3" height="6" fill="#d0d0d0" stroke="none"/>
  <path d="M16 12.5 h7 a4.5 4.5 0 0 1 0 9 h-7" stroke-width="3"/></g>
  <g stroke="#c0c0c0" fill="none"><path d="M50 5v24M58 5v24M50 5h8M50 9h8M50 13h8M50 17h8M50 21h8M50 25h8M50 29h8" stroke-width="1.2"/>
  <path d="M61 12.500 h7 a4.5 4.5 0 0 1 0 9 h-7" stroke-width="3"/></g>
  <g fill="#c0c0c0"><rect x="96" y="6" width="6" height="6"/><rect x="96" y="14" width="6" height="6"/><rect x="96" y="22" width="6" height="6"/></g>
  <path d="M106 12.5 h7 a4.5 4.5 0 0 1 0 9 h-7" stroke="#c0c0c0" fill="none" stroke-width="3"/>
</svg>
<div class="abs psep" style="top:567px"></div>
<div class="plabel song" style="left:1560px;top:579px">首选项</div>
<div class="plabel song" style="left:1560px;top:617px">键盘增量 :</div>
<div class="field" style="left:1637px;top:608px;width:89px;height:30px;border-radius:4px;border-color:#464646;background:#242424"></div>
<div class="plabel mono" style="left:1643px;top:611px;color:#d6d6d6;letter-spacing:.1px;word-spacing:3px">0.3528 <span style="display:inline-block;transform:scaleX(.62);transform-origin:0 50%;letter-spacing:0">mm</span></div>
<div class="cb" style="top:652px"></div><div class="cblabel song" style="top:651px">使用预览边界</div>
<div class="cb" style="top:688px"></div><div class="cblabel song" style="top:687px">缩放边角</div>
<div class="cb" style="top:724px"></div><div class="cblabel song" style="top:723px">缩放描边和效果</div>
<svg style="left:1560px;top:652px" width="19" height="92"><g fill="none" stroke="#2a2a2a" stroke-width="2.4"><path d="M4 10 L8 14 L15 5"/><path d="M4 46 L8 50 L15 41"/><path d="M4 82 L8 86 L15 77"/></g></svg>
<div class="abs psep" style="top:766px"></div>
<div class="plabel song" style="left:1560px;top:789px">快速操作</div>
<div class="btn song" style="left:1559px;top:820px;width:150px;height:31px;font-size:15px;line-height:29px;padding-top:3px;color:#dcdcdc;font-weight:500">文档设置</div>
<div class="btn song" style="left:1724px;top:820px;width:150px;height:31px;font-size:15px;line-height:29px;padding-top:3px;color:#dcdcdc;font-weight:500">首选项</div>
<!-- watermark -->
<svg style="left:1755px;top:1005px" width="60" height="60" viewBox="1755 1005 60 60">
  <g fill="none" stroke="#8c8c8c" stroke-linecap="round">
  <path d="M1774 1022.500 C1777 1017.500 1783 1016 1788 1016.500" stroke-width="3"/>
  <path d="M1790 1016.500 C1796 1017 1801 1020 1803.500 1024" stroke-width="2.600"/>
  <path d="M1805 1025.500 C1807.500 1030 1807 1035 1803 1038" stroke-width="2.800"/>
  <path d="M1770.500 1023.500 C1778 1024.500 1781 1030 1785 1036 C1790 1042.500 1800 1042 1808 1036" stroke-width="3.200"/>
  <path d="M1780 1029 C1784 1027.500 1788 1028.500 1790.500 1030" stroke-width="2"/>
  <path d="M1789 1036.500 C1794 1040 1801 1040 1806 1036.500" stroke-width="2.400"/>
  <path d="M1771 1026 C1768.500 1036 1770 1046 1776.500 1054" stroke-width="1.500"/>
  <path d="M1773.500 1027 C1771.500 1037 1774 1048 1783 1057.500" stroke-width="1.600"/>
  <path d="M1776 1029 C1775 1039 1779 1049 1790 1057" stroke-width="1.700"/>
  <path d="M1778.500 1032 C1779 1040 1785 1049 1798 1054.500" stroke-width="1.700"/>
  <path d="M1781.500 1036 C1784 1042 1791 1047 1802 1047.500" stroke-width="1.800"/>
  </g>
</svg>
<div class="abs sans" style="left:1812px;top:1018px;font-size:22px;line-height:28px;font-weight:bold;color:#8c8c8c;letter-spacing:0px;white-space:nowrap">穿针引线</div>
<div class="abs sans" style="left:1813px;top:1041px;font-size:11px;line-height:12px;color:#8c8c8c;letter-spacing:5.1px;white-space:nowrap">EEFF.NET</div>

<!-- ================= STATUS ================= -->
<div id="status" class="abs"></div>
<div id="propfoot" class="abs"></div>
<div class="abs" style="left:5px;top:1059px;width:76px;height:21px;background:#252525;border:1px solid #3a3a3a;border-bottom:none"></div>
<div class="abs mono" style="left:10px;top:1061px;line-height:22px;color:#cfcfcf;letter-spacing:-.2px;white-space:nowrap">84.97%</div>
<div class="abs" style="left:80px;top:1059px;width:27px;height:21px;background:#2e2e2e;border:1px solid #3a3a3a;border-bottom:none"></div>
<svg style="left:87px;top:1066px" width="14" height="10"><path d="M1.5 2 L7 7.5 L12.5 2" fill="none" stroke="#d8d8d8" stroke-width="2"/></svg>
<svg style="left:120px;top:1064px" width="192" height="14">
  <g fill="#505050"><rect x="1" y="1" width="2.5" height="12"/><path d="M14 1 L5 7 L14 13 Z"/><path d="M38 1 L30 7 L38 13 Z"/>
  <path d="M153 1 L161 7 L153 13 Z"/><path d="M176 1 L185 7 L176 13 Z"/><rect x="186.500" y="1" width="2.5" height="12"/></g>
</svg>
<div class="abs" style="left:170px;top:1059px;width:62px;height:21px;background:#252525;border:1px solid #3a3a3a;border-bottom:none"></div>
<div class="abs mono" style="left:176px;top:1061px;line-height:22px;color:#cfcfcf">1</div>
<div class="abs" style="left:231px;top:1059px;width:27px;height:21px;background:#2e2e2e;border:1px solid #3a3a3a;border-bottom:none"></div>
<svg style="left:237px;top:1066px" width="14" height="10"><path d="M1.5 2 L7 7.5 L12.5 2" fill="none" stroke="#d8d8d8" stroke-width="2"/></svg>
<div class="abs" style="left:321px;top:1059px;width:301px;height:21px;background:#323232;border-left:1px solid #262626"></div>
<div class="abs song" style="left:453px;top:1062px;font-size:18px;line-height:22px;color:#8c8c8c;white-space:nowrap">选择</div>
<div class="abs" style="left:622px;top:1059px;width:26px;height:21px;background:#323232;border-left:1px solid #262626"></div>
<svg style="left:631px;top:1064px" width="10" height="16"><path d="M1 1 L9 8 L1 15 Z" fill="#d8d8d8"/></svg>
<svg style="left:657px;top:1063px" width="8" height="13"><path d="M6.500 1 L1.500 6.500 L6.500 12" fill="none" stroke="#a0a0a0" stroke-width="1.5"/></svg>
<div class="abs" style="left:1326px;top:1059px;width:38px;height:26px;background:#3d3d3d;border-radius:11px"></div>
<div class="grip" style="left:1716px;top:1071px;width:29px;height:6px"></div>

<!-- ================= ARTWORK ================= -->
<div class="abs" style="left:108px;top:96px;width:7px;height:799px;background:linear-gradient(90deg,#e9e9e9,#fff)"></div>
<div class="abs" style="left:1475px;top:96px;width:7px;height:662px;background:linear-gradient(270deg,#e9e9e9,#fff)"></div>
<div class="abs" style="left:1535px;top:758px;width:7px;height:299px;background:linear-gradient(270deg,#e9e9e9,#fff)"></div>
<svg style="left:0;top:0" width="1920" height="1080" viewBox="0 0 1920 1080">
<g fill="none" stroke-linecap="butt" stroke-linejoin="round">
<path d="M306.7 205.5C284.5 242 263.2 276.9 240 315C216.8 353.1 187.5 398.4 167.4 434.4C147.3 470.3 135.3 498.6 119.3 530.7" stroke="#000" stroke-width="1.7"/>
<path d="M302 216C280 253.3 258 290.3 236 328C214 365.7 186.4 413.8 170 442C153.6 470.2 148.5 478.9 137.8 497.4" stroke="#000" stroke-width="1.0"/>
<path d="M119.3 530.7C123.5 536.5 126 542.6 132 548C137.9 553.4 147.2 559.1 155 563C162.8 566.9 170.7 568.7 178.5 571.5" stroke="#000" stroke-width="1.7"/>
<path d="M178.5 571.5L200.7 532.6" stroke="#000" stroke-width="1.7"/>
<path d="M200.7 532.6C217.1 505.1 235.5 473.8 250 450C264.5 426.2 277.8 406.7 287.8 390C297.8 373.3 304.5 360.8 310 350C315.5 339.2 317.3 333.3 321 325" stroke="#000" stroke-width="1.3"/>
<path d="M137.8 491.9L200.7 532.6" stroke="#000" stroke-width="1.2"/>
<path d="M133 504.8L194.4 545.6" stroke="#555" stroke-width="0.9"/>
<path d="M137 496.3L198.5 536.6" stroke="#000" stroke-width="1.2" stroke-dasharray="2.6 1.7"/>
<path d="M134.8 500.6L196.4 541" stroke="#000" stroke-width="1.2" stroke-dasharray="2.6 1.7"/>
<path d="M305.6 207.8C303.1 212.2 300.3 216.6 298 221C295.7 225.4 293.5 229.3 292 234C290.5 238.7 289.9 244 288.9 249" stroke="#000" stroke-width="0.9"/>
<path d="M323 322C319.3 331.3 315.8 341.7 312 350C308.2 358.3 303.9 365.3 300 372C296.1 378.7 292.6 384 288.9 390" stroke="#000" stroke-width="0.8"/>
<path d="M396.7 151.6L307.8 202.2" stroke="#000" stroke-width="1.3"/>
<path d="M397.8 162.2L313.3 208.9" stroke="#000" stroke-width="1.2"/>
<path d="M398.9 168.2L320 214.4" stroke="#777" stroke-width="0.9"/>
<path d="M398.2 164.3L315.5 210.8" stroke="#000" stroke-width="1.2" stroke-dasharray="2.6 1.7"/>
<path d="M398.6 166.3L317.7 212.6" stroke="#000" stroke-width="1.2" stroke-dasharray="2.6 1.7"/>
<path d="M306.7 206.2C308.9 207.1 311.1 207.5 313.3 208.9C315.5 210.3 317.8 212.6 320 214.4" stroke="#000" stroke-width="1.0"/>
<path d="M313 201C314.7 202.7 316.5 204.3 318 206C319.5 207.7 320.7 209.3 322 211" stroke="#000" stroke-width="0.9"/>
<path d="M307.8 203C311.2 209.3 315 216 318 222C321 228 323.6 231.6 325.6 238.9C327.6 246.2 329.6 256 330 265.6C330.4 275.2 329.3 287.4 328.2 296.7C327.1 305.9 325 313 323.3 321.1C321.6 329.2 319.6 337.4 317.8 345.6" stroke="#000" stroke-width="1.3"/>
<path d="M319 213C321.7 217.3 324.6 221.7 327 226C329.4 230.3 331.7 232.3 333.3 238.9C334.9 245.5 336.3 256 336.7 265.6C337.1 275.2 336.7 287.4 335.6 296.7C334.5 305.9 332.2 313.7 330 321.1C327.8 328.5 324.8 334.4 322.2 341" stroke="#444" stroke-width="1.0"/>
<path d="M311.5 207C314.7 212.8 318.2 219.2 321 224.5C323.8 229.8 326.3 232.1 328.2 238.9C330.1 245.8 331.8 256 332.2 265.6C332.6 275.2 331.8 287.4 330.7 296.7C329.6 305.9 327.4 313.2 325.5 321.1C323.6 329 321.4 336.4 319.3 344" stroke="#000" stroke-width="1.2" stroke-dasharray="2.6 1.7"/>
<path d="M315 210C318.2 215.2 321.9 220.7 324.5 225.5C327.1 230.3 329.1 232.2 330.8 238.9C332.5 245.6 334.1 256 334.5 265.6C334.9 275.2 334.3 287.4 333.2 296.7C332.1 305.9 329.9 313.5 327.8 321.1C325.7 328.7 323.1 335.4 320.8 342.5" stroke="#000" stroke-width="1.2" stroke-dasharray="2.6 1.7"/>
<path d="M317.8 345.6C315.9 356.7 313.7 367.9 312 379C310.3 390.1 309.1 400.2 307.8 412C306.5 423.8 304.8 437.9 304 450C303.2 462.1 303.2 463.7 303 484.5C302.8 505.3 302.9 544.7 302.9 574.8" stroke="#000" stroke-width="1.7"/>
<path d="M312.5 399.7L320.5 399.7L315 522.3L307 522.3Z" stroke="#000" stroke-width="1.1"/>
<path d="M314.9 401.7L309.4 520.3" stroke="#000" stroke-width="1.2" stroke-dasharray="2.6 1.7"/>
<path d="M318.1 401.7L312.6 520.3" stroke="#000" stroke-width="1.2" stroke-dasharray="2.6 1.7"/>
<path d="M609.3 205.5C631.5 242 652.8 276.9 676 315C699.2 353.1 728.5 398.4 748.6 434.4C768.7 470.3 780.7 498.6 796.7 530.7" stroke="#000" stroke-width="1.7"/>
<path d="M614 216C636 253.3 658 290.3 680 328C702 365.7 729.6 413.8 746 442C762.4 470.2 767.5 478.9 778.2 497.4" stroke="#000" stroke-width="1.0"/>
<path d="M796.7 530.7C792.5 536.5 790 542.6 784 548C778 553.4 768.8 559.1 761 563C753.2 566.9 745.3 568.7 737.5 571.5" stroke="#000" stroke-width="1.7"/>
<path d="M737.5 571.5L715.3 532.6" stroke="#000" stroke-width="1.7"/>
<path d="M715.3 532.6C698.9 505.1 680.5 473.8 666 450C651.5 426.2 638.2 406.7 628.2 390C618.2 373.3 611.5 360.8 606 350C600.5 339.2 598.7 333.3 595 325" stroke="#000" stroke-width="1.3"/>
<path d="M778.2 491.9L715.3 532.6" stroke="#000" stroke-width="1.2"/>
<path d="M783 504.8L721.6 545.6" stroke="#555" stroke-width="0.9"/>
<path d="M779 496.3L717.5 536.6" stroke="#000" stroke-width="1.2" stroke-dasharray="2.6 1.7"/>
<path d="M781.2 500.6L719.6 541" stroke="#000" stroke-width="1.2" stroke-dasharray="2.6 1.7"/>
<path d="M608 207C611.3 213 614.5 218.5 618 225C621.5 231.5 625.9 238.9 629 246C632.1 253.1 634.1 260.5 636.7 267.8" stroke="#000" stroke-width="0.9"/>
<path d="M593 322C596.7 331.3 600.2 341.7 604 350C607.8 358.3 612.1 365.3 616 372C619.9 378.7 623.4 384 627.1 390" stroke="#000" stroke-width="0.8"/>
<path d="M519.3 151.6L608.2 202.2" stroke="#000" stroke-width="1.3"/>
<path d="M518.2 162.2L602.7 208.9" stroke="#000" stroke-width="1.2"/>
<path d="M517.1 168.2L596 214.4" stroke="#777" stroke-width="0.9"/>
<path d="M517.8 164.3L600.5 210.8" stroke="#000" stroke-width="1.2" stroke-dasharray="2.6 1.7"/>
<path d="M517.4 166.3L598.3 212.6" stroke="#000" stroke-width="1.2" stroke-dasharray="2.6 1.7"/>
<path d="M609.3 206.2C607.1 207.1 604.9 207.5 602.7 208.9C600.5 210.3 598.2 212.6 596 214.4" stroke="#000" stroke-width="1.0"/>
<path d="M603 201C601.3 202.7 599.5 204.3 598 206C596.5 207.7 595.3 209.3 594 211" stroke="#000" stroke-width="0.9"/>
<path d="M608.2 203C604.8 209.3 601 216 598 222C595 228 592.4 231.6 590.4 238.9C588.4 246.2 586.4 256 586 265.6C585.6 275.2 586.7 287.4 587.8 296.7C588.9 305.9 591 313 592.7 321.1C594.4 329.2 596.4 337.4 598.2 345.6" stroke="#000" stroke-width="1.3"/>
<path d="M597 213C594.3 217.3 591.4 221.7 589 226C586.6 230.3 584.3 232.3 582.7 238.9C581.1 245.5 579.7 256 579.3 265.6C578.9 275.2 579.3 287.4 580.4 296.7C581.5 305.9 583.8 313.7 586 321.1C588.2 328.5 591.2 334.4 593.8 341" stroke="#444" stroke-width="1.0"/>
<path d="M604.5 207C601.3 212.8 597.8 219.2 595 224.5C592.2 229.8 589.7 232.1 587.8 238.9C585.9 245.8 584.2 256 583.8 265.6C583.4 275.2 584.2 287.4 585.3 296.7C586.4 305.9 588.6 313.2 590.5 321.1C592.4 329 594.6 336.4 596.7 344" stroke="#000" stroke-width="1.2" stroke-dasharray="2.6 1.7"/>
<path d="M601 210C597.8 215.2 594.1 220.7 591.5 225.5C588.9 230.3 586.9 232.2 585.2 238.9C583.5 245.6 581.9 256 581.5 265.6C581.1 275.2 581.7 287.4 582.8 296.7C583.9 305.9 586.1 313.5 588.2 321.1C590.3 328.7 592.9 335.4 595.2 342.5" stroke="#000" stroke-width="1.2" stroke-dasharray="2.6 1.7"/>
<path d="M598.2 345.6C600.1 356.7 602.3 367.9 604 379C605.7 390.1 606.9 400.2 608.2 412C609.5 423.8 611.2 437.9 612 450C612.8 462.1 612.8 463.7 613 484.5C613.2 505.3 613.1 544.7 613.1 574.8" stroke="#000" stroke-width="1.7"/>
<path d="M605 399.7L597 399.7L600.5 522.3L608.5 522.3Z" stroke="#000" stroke-width="1.1"/>
<path d="M599.4 401.7L602.9 520.3" stroke="#000" stroke-width="1.2" stroke-dasharray="2.6 1.7"/>
<path d="M602.6 401.7L606.1 520.3" stroke="#000" stroke-width="1.2" stroke-dasharray="2.6 1.7"/>
<path d="M330 261.8H435M437.4 261.8H586" stroke="#000" stroke-width="1.8"/>
<path d="M330 270H435M470 270H586" stroke="#000" stroke-width="1.5"/>
<path d="M437.4 270H462" stroke="#888" stroke-width="1.0"/>
<path d="M330 263.6H435M438 263.6H586M330 268.2H435M438 268.2H586" stroke="#000" stroke-width="1.5" stroke-dasharray="3 2"/>
<path d="M302.9 574.8C328.6 576.5 352.9 578.8 380 580C407.1 581.2 438.7 582.1 465.4 582C492.1 581.9 515.4 580.9 540 579.5C564.6 578.1 588.7 575.6 613.1 573.6" stroke="#000" stroke-width="1.8"/>
<path d="M306 569.5C330.7 571.5 357.7 574.2 380 575.5C402.3 576.8 420 576.8 440 577.5" stroke="#000" stroke-width="1.1" stroke-dasharray="3.2 2"/>
<path d="M472 578C494.7 577 516.8 576.5 540 575C563.2 573.5 587.3 571 611 569" stroke="#000" stroke-width="1.1" stroke-dasharray="3.2 2"/>
<path d="M304 536.2C326 538.8 347.9 542.2 370 544C392.1 545.8 419.8 546.5 436.5 547C453.2 547.5 452.8 547.1 470 546.8C487.2 546.5 516.4 546 540 545C563.6 544 587.7 542 611.5 540.5" stroke="#777" stroke-width="1.0"/>
<path d="M304 543.8C326 546.4 347.9 549.8 370 551.6C392.1 553.4 419.8 554.1 436.5 554.6C453.2 555.1 452.8 554.7 470 554.4C487.2 554.1 516.4 553.6 540 552.6C563.6 551.6 587.7 549.6 611.5 548.1" stroke="#777" stroke-width="1.0"/>
<path d="M304 538.9C326 541.5 347.9 544.9 370 546.7C392.1 548.5 419.8 549.2 436.5 549.7C453.2 550.2 452.8 549.8 470 549.5C487.2 549.2 516.4 548.8 540 547.7C563.6 546.7 587.7 544.7 611.5 543.2" stroke="#000" stroke-width="0.9" stroke-dasharray="3 1.8"/>
<path d="M304 541.2C326 543.8 347.9 547.2 370 549C392.1 550.8 419.8 551.5 436.5 552C453.2 552.5 452.8 552.1 470 551.8C487.2 551.5 516.4 551 540 550C563.6 549 587.7 547 611.5 545.5" stroke="#000" stroke-width="0.9" stroke-dasharray="3 1.8"/>
<path d="M437.1 224.4C437.1 282.9 437.1 347.4 437 400C436.9 452.6 436.7 513.3 436.8 540C436.9 566.7 436.8 554.5 437.5 560C438.2 565.5 439.1 569.6 441 573C442.9 576.4 446.2 579 449 580.5C451.8 582 455 581.5 458 582" stroke="#000" stroke-width="1.5"/>
<path d="M443.2 226V577" stroke="#444" stroke-width="1.0" stroke-dasharray="3.2 2.6"/>
<path d="M462.3 214V582M470.2 216V582" stroke="#000" stroke-width="1.3"/>
<path d="M464.5 214V582M467.7 216V582" stroke="#000" stroke-width="1.25" stroke-dasharray="3 2"/>
<path d="M338.4 308.9H418.4V385.6L378.9 398.4L338.4 382.2Z" stroke="#000" stroke-width="1.5"/>
<path d="M338.4 316.2H418.4" stroke="#000" stroke-width="1.1"/>
<path d="M345.6 316.2V377.8L378.9 391L411.6 380V316.2" stroke="#000" stroke-width="1.2"/>
<path d="M339.4 311.2H417.4M339.4 313.8H417.4" stroke="#000" stroke-width="1.2" stroke-dasharray="2.8 1.8"/>
<path d="M340.9 317V379.500L378.9 393.500L415.9 382.500V317" stroke="#000" stroke-width="1.2" stroke-dasharray="2.8 1.8"/>
<path d="M343.4 317V378.500L378.9 392L413.4 381V317" stroke="#000" stroke-width="1.2" stroke-dasharray="2.8 1.8"/>
<path d="M346.9 317.500L410.4 378M410.9 317.500L346.9 378.500" stroke="#000" stroke-width="1.15" stroke-dasharray="4 2.4"/>
<path d="M494.3 308.9H574.3V385.6L534.8 398.4L494.3 382.2Z" stroke="#000" stroke-width="1.5"/>
<path d="M494.3 316.2H574.3" stroke="#000" stroke-width="1.1"/>
<path d="M501.5 316.2V377.8L534.8 391L567.5 380V316.2" stroke="#000" stroke-width="1.2"/>
<path d="M495.3 311.2H573.3M495.3 313.8H573.3" stroke="#000" stroke-width="1.2" stroke-dasharray="2.8 1.8"/>
<path d="M496.8 317V379.500L534.8 393.500L571.8 382.500V317" stroke="#000" stroke-width="1.2" stroke-dasharray="2.8 1.8"/>
<path d="M499.3 317V378.500L534.8 392L569.3 381V317" stroke="#000" stroke-width="1.2" stroke-dasharray="2.8 1.8"/>
<path d="M502.8 317.500L566.3 378M566.8 317.500L502.8 378.500" stroke="#000" stroke-width="1.15" stroke-dasharray="4 2.4"/>
<path d="M418 125.4L418.2 127.1L418.4 128.8L418.5 130.5L418.7 132.2L418.9 133.9L419.1 135.6L419.3 137.3L419.6 139L419.9 140.7L420.3 142.3L420.6 143.8L421 145.4L421.4 147.1L421.9 148.9L422.5 150.9L423.2 153.2L424 155.8L424.8 158.6L425.8 161.7L426.8 164.9L427.8 168.2L428.9 171.4L430.1 174.6L431.3 177.5L432.6 180.3L434 183.2L435.4 186L436.9 188.7L438.4 191.4L439.9 193.9L441.4 196.2L442.9 198.3L444.4 200.2L445.9 201.9L447.4 203.5L448.9 204.9L450.4 206.2L451.8 207.3L453.2 208.4L454.4 209.3L455.5 210.1L456.5 210.6L457.4 211L458.2 211.3L459 211.5L459.8 211.7L460.6 211.9L461.4 212.2L453.3 215.7L420.9 229.6L420.9 229.6L419.6 225.7L418.3 221.7L417 217.8L415.6 213.9L414.3 209.9L413 206L411.7 202L410.5 198L409.2 193.9L407.9 189.5L406.6 185.1L405.4 180.7L404.1 176.4L403 172.4L402 168.8L401.2 165.6L400.5 163L400 160.8L399.7 159L399.4 157.4L399.2 156L399 154.7L398.8 153.4L398.6 152L398.4 150.6L398.3 149.3L398.1 148L398 146.9L398 145.7L397.9 144.6L397.8 143.4L397.7 142.2L414.5 123.7Z" fill="#fff" stroke="none"/>
<path d="M496.7 125.4L496.5 127.1L496.4 128.8L496.3 130.5L496.1 132.2L496 133.9L495.8 135.6L495.6 137.3L495.3 139L495 140.7L494.7 142.3L494.4 143.8L494 145.4L493.6 147.1L493.2 148.9L492.6 150.9L492 153.2L491.3 155.8L490.5 158.6L489.7 161.7L488.8 164.9L487.8 168.2L486.8 171.4L485.7 174.6L484.5 177.5L483.2 180.3L481.9 183.2L480.4 186.1L478.9 188.8L477.3 191.5L475.8 194L474.4 196.3L473 198.3L471.7 200L470.5 201.5L469.4 202.8L468.3 204L467.2 205L466.1 205.9L464.9 206.7L463.7 207.6L462.5 208.4L461.2 209.1L459.9 209.7L458.6 210.2L457.2 210.7L455.9 211.2L454.6 211.7L453.3 212.2L459 213.4L492.6 229.6L492.6 229.6L494 225.7L495.3 221.7L496.7 217.8L498.1 213.9L499.5 209.9L500.8 206L502.2 202L503.5 198L504.9 193.9L506.3 189.5L507.7 185.1L509.2 180.7L510.5 176.4L511.8 172.4L512.9 168.8L513.8 165.6L514.5 163L515 160.8L515.4 159L515.7 157.4L515.9 156L516 154.7L516.2 153.4L516.4 152L516.6 150.6L516.8 149.3L516.9 148L517 146.9L517.2 145.7L517.3 144.6L517.4 143.4L517.5 142.2L499 123.7Z" fill="#fff" stroke="none"/>
<path d="M414.5 123.7C421.7 124 428.9 124.4 436 124.6C443.1 124.8 450 125 457 125C464 125 471 124.8 478 124.5C485 124.2 492 123.8 499 123.5" stroke="#000" stroke-width="2.0"/>
<path d="M414.5 123.7L397.7 142.2" stroke="#000" stroke-width="1.9"/>
<path d="M499 123.7L517.5 142.2" stroke="#000" stroke-width="1.9"/>
<path d="M397.7 142.2C398 145.5 398 148.1 398.6 152C399.2 155.9 399.2 157.9 401.2 165.6C403.2 173.3 407.2 187.3 410.5 198C413.8 208.7 417.4 219.1 420.9 229.6" stroke="#000" stroke-width="2.2"/>
<path d="M517.5 142.2C517.1 145.5 517 148.1 516.4 152C515.8 155.9 515.9 157.9 513.8 165.6C511.6 173.3 507 187.3 503.5 198C500 208.7 496.2 219.1 492.6 229.6" stroke="#000" stroke-width="2.2"/>
<path d="M420.9 229.6L453.3 215.7L460.2 212" stroke="#000" stroke-width="1.8"/>
<path d="M492.6 229.6L459 213.4L453.3 209.3" stroke="#000" stroke-width="1.8"/>
<path d="M418 125.4C418.5 129.9 418.7 134.4 419.6 139C420.5 143.6 421.2 146.8 423.2 153.2C425.1 159.6 428 170 431.3 177.5C434.6 185 439 193 442.9 198.3C446.8 203.6 451.3 207 454.4 209.3C457.5 211.6 459.1 211.2 461.4 212.2" stroke="#000" stroke-width="1.4"/>
<path d="M496.7 125.4C496.2 129.9 496.1 134.4 495.3 139C494.5 143.6 493.8 146.8 492 153.2C490.2 159.6 487.7 170 484.5 177.5C481.3 185 476.5 193.3 473 198.3C469.5 203.3 467 205.3 463.7 207.6C460.4 209.9 456.8 210.7 453.3 212.2" stroke="#000" stroke-width="1.4"/>
<path d="M401.8 143C402.1 146 402.1 148.3 402.6 152C403.1 155.7 403.1 157.4 405 165C406.9 172.6 411.2 187.6 414.2 197.5C417.2 207.4 416.9 222.1 423.2 224.5C429.5 226.9 442.4 216.2 452 212" stroke="#333" stroke-width="1.0"/>
<path d="M400.2 144.5C400.5 147.2 400.5 149 401 152.5C401.5 156 401.4 157.8 403.3 165.3C405.2 172.9 409.4 187.5 412.5 197.8C415.6 208.1 415.6 224.3 422 227C428.4 229.7 441.3 218.5 451 214.2" stroke="#000" stroke-width="1.2" stroke-dasharray="2.6 1.7"/>
<path d="M513.6 143C513.3 146 513.2 148.3 512.6 152C512 155.7 512.3 157.4 510.2 165C508.1 172.6 503.3 187.6 500 197.5C496.7 207.4 496.9 222.3 490.5 224.5C484.1 226.7 471.2 215.2 461.5 210.6" stroke="#333" stroke-width="1.0"/>
<path d="M515.2 144.5C514.9 147.2 514.8 149 514.3 152.5C513.8 156 514 157.8 511.9 165.3C509.8 172.9 505 187.5 501.6 197.8C498.2 208.1 498.2 224.5 491.6 227C485 229.5 471.9 217.4 462 212.6" stroke="#000" stroke-width="1.2" stroke-dasharray="2.6 1.7"/>
<path d="M423.3 152.2C428.9 151.4 434.2 150.2 440 149.7C445.8 149.2 452 149 457.8 149C463.6 149 469.5 149.2 475 149.7C480.5 150.2 485.5 151.4 490.7 152.2" stroke="#777" stroke-width="0.9"/>
<path d="M424 156.2C429.3 155.4 434.4 154.2 440 153.7C445.6 153.2 452 153 457.8 153C463.6 153 469.6 153.2 475 153.7C480.4 154.2 485 155.4 490 156.2" stroke="#777" stroke-width="0.9"/>
<path d="M423.6 153.5C429.1 152.7 434.3 151.5 440 151C445.7 150.5 452 150.3 457.8 150.3C463.6 150.3 469.6 150.5 475 151C480.4 151.5 485.3 152.7 490.4 153.5" stroke="#000" stroke-width="1.2" stroke-dasharray="2.6 1.7"/>
<path d="M423.8 154.9C429.2 154.1 434.3 152.9 440 152.4C445.7 151.9 452 151.7 457.8 151.7C463.6 151.7 469.6 151.9 475 152.4C480.4 152.9 485.1 154.1 490.2 154.9" stroke="#000" stroke-width="1.2" stroke-dasharray="2.6 1.7"/>
<circle cx="427.1" cy="208.4" r="6.300" fill="#000" stroke="none"/>
<circle cx="488.4" cy="208.4" r="6.300" fill="#000" stroke="none"/>
<circle cx="452.200" cy="232.2" r="6.300" fill="#000" stroke="none"/>
<path d="M457 231.3 H468.500 L477 232.5 L468.500 233.1 H457 Z" fill="#fff" stroke="#000" stroke-width=".9"/>
<path d="M468.500 231.3 L477 232.5 L468.500 233.3 Z" fill="#000" stroke="#000" stroke-width=".8"/>
<circle cx="452.200" cy="299.3" r="6.300" fill="#000" stroke="none"/>
<path d="M457 298.4 H468.500 L477 299.6 L468.500 300.2 H457 Z" fill="#fff" stroke="#000" stroke-width=".9"/>
<path d="M468.500 298.4 L477 299.6 L468.500 300.4 Z" fill="#000" stroke="#000" stroke-width=".8"/>
<circle cx="452.200" cy="366" r="6.300" fill="#000" stroke="none"/>
<path d="M457 365.1 H468.500 L477 366.3 L468.500 366.9 H457 Z" fill="#fff" stroke="#000" stroke-width=".9"/>
<path d="M468.500 365.1 L477 366.3 L468.500 367.1 Z" fill="#000" stroke="#000" stroke-width=".8"/>
<circle cx="452.200" cy="432.2" r="6.300" fill="#000" stroke="none"/>
<path d="M457 431.3 H468.500 L477 432.5 L468.500 433.1 H457 Z" fill="#fff" stroke="#000" stroke-width=".9"/>
<path d="M468.500 431.3 L477 432.5 L468.500 433.3 Z" fill="#000" stroke="#000" stroke-width=".8"/>
<circle cx="452.200" cy="498.9" r="6.300" fill="#000" stroke="none"/>
<path d="M457 498 H468.500 L477 499.2 L468.500 499.8 H457 Z" fill="#fff" stroke="#000" stroke-width=".9"/>
<path d="M468.500 498 L477 499.2 L468.500 500 Z" fill="#000" stroke="#000" stroke-width=".8"/>
<circle cx="452.200" cy="565.6" r="6.300" fill="#000" stroke="none"/>
<path d="M457 564.7 H468.500 L477 565.9 L468.500 566.5 H457 Z" fill="#fff" stroke="#000" stroke-width=".9"/>
<path d="M468.500 564.7 L477 565.9 L468.500 566.7 Z" fill="#000" stroke="#000" stroke-width=".8"/>
</g>
<g fill="none" stroke-linecap="butt" stroke-linejoin="round">
<path d="M990.5 201.1C977 222.4 963 244 950 265C937 286 927.2 301.2 912.2 327C897.2 352.8 878.2 386.7 860 420C841.8 453.3 822 491.3 803 527" stroke="#000" stroke-width="1.7"/>
<path d="M984 211C971.3 231.3 959.2 250.5 946 272C932.8 293.5 919.7 314.3 905 340C890.3 365.7 871.9 400.7 858 426C844.1 451.3 833.7 469.9 821.5 491.9" stroke="#000" stroke-width="1.0"/>
<path d="M803 527C807 533 809.5 539.5 815 545C820.5 550.5 828.4 555.9 836 560C843.6 564.1 852.3 566.4 860.4 569.6" stroke="#000" stroke-width="1.7"/>
<path d="M860.4 569.6L882.6 530.7" stroke="#000" stroke-width="1.7"/>
<path d="M882.6 530.7C898.4 505.5 915.4 477.6 930 455C944.6 432.4 959 409.7 970 395C981 380.3 987.2 376.1 995.8 366.7" stroke="#000" stroke-width="1.3"/>
<path d="M821.5 491.9L882.6 530.7" stroke="#000" stroke-width="1.2"/>
<path d="M814 504.8L877 543.7" stroke="#555" stroke-width="0.9"/>
<path d="M819 496.2L880.7 535" stroke="#000" stroke-width="1.2" stroke-dasharray="2.6 1.7"/>
<path d="M816.5 500.5L878.8 539.3" stroke="#000" stroke-width="1.2" stroke-dasharray="2.6 1.7"/>
<path d="M1015.5 281.5L1005.9 296.2L996.4 310.7L986.8 325.3L977.1 340.1L967.2 355.3L957 371.2L946.3 388L935.4 405.2L924.6 422.3L914.1 438.9L904.1 454.6L894.8 469.3L885.8 483.4L877 497.2L868.3 511L859.4 525" stroke="#000" stroke-width="1.2"/>
<path d="M1007.9 276.5L998.2 291.1L988.7 305.7L979.1 320.2L969.4 335L959.5 350.3L949.2 366.3L938.5 383.1L927.6 400.3L916.8 417.4L906.3 434L896.4 449.6L887 464.4L878 478.5L869.2 492.3L860.5 506.1L851.6 520" stroke="#000" stroke-width="1.2"/>
<path d="M1013.6 280.3L1004 294.9L994.4 309.4L984.9 324L975.2 338.8L965.3 354L955 370L944.4 386.8L933.5 403.9L922.6 421.1L912.1 437.7L902.2 453.3L892.8 468.1L883.9 482.2L875.1 496L866.3 509.8L857.4 523.7" stroke="#000" stroke-width="1.3" stroke-dasharray="3 2"/>
<path d="M1009.8 277.7L1000.2 292.4L990.6 306.9L981 321.5L971.3 336.3L961.4 351.5L951.2 367.5L940.5 384.3L929.6 401.5L918.7 418.6L908.2 435.2L898.3 450.9L889 465.6L880 479.7L871.2 493.5L862.4 507.3L853.6 521.3" stroke="#000" stroke-width="1.3" stroke-dasharray="3 2"/>
<path d="M989 204.5C985.3 210.3 981.5 215.8 978 222C974.5 228.2 970.7 234.8 968 242C965.3 249.2 964 257.3 962 265" stroke="#000" stroke-width="0.9"/>
<path d="M1003 330C1002 335 1000.8 341.3 1000 345C999.2 348.7 999.2 349.2 998 352C996.8 354.8 994.7 358.7 993 362" stroke="#000" stroke-width="0.8"/>
<path d="M1076.7 152.2C1061.1 160.8 1044.3 169.8 1030 178C1015.7 186.2 1004.1 193.4 991.1 201.1" stroke="#000" stroke-width="1.6"/>
<path d="M1088.1 159.8L1001.6 207.8" stroke="#000" stroke-width="1.2"/>
<path d="M1083.9 152.2L997.4 200.2" stroke="#000" stroke-width="1.2"/>
<path d="M1087 157.9L1000.5 205.9" stroke="#000" stroke-width="1.3" stroke-dasharray="3 2"/>
<path d="M1085 154.1L998.5 202.1" stroke="#000" stroke-width="1.3" stroke-dasharray="3 2"/>
<path d="M990 202.5C993.9 209.4 998.7 216.2 1001.7 223.3C1004.8 230.4 1006.9 238.6 1008.3 245C1009.7 251.4 1010 256.4 1010.3 261.7C1010.6 267 1010.5 270.9 1010 276.7C1009.5 282.5 1008.8 288.9 1007.5 296.7C1006.2 304.5 1004 314.7 1002.5 323.3C1001 331.9 999.4 341.1 998.3 348.3C997.2 355.5 996.6 360.6 995.8 366.7" stroke="#000" stroke-width="1.3"/>
<path d="M998.3 200.8C1002.2 206.6 1006.9 211.8 1010 218.3C1013.1 224.8 1015.2 233.1 1016.7 240C1018.2 246.9 1018.9 253.3 1019.2 260C1019.5 266.7 1019.3 273.3 1018.7 280C1018.1 286.7 1017.2 292.8 1015.8 300C1014.3 307.2 1012.1 316.1 1010 323.3C1007.9 330.5 1005.1 338.9 1003.3 343.3C1001.5 347.8 1000.6 347.8 999.2 350" stroke="#000" stroke-width="1.2"/>
<path d="M992.2 202C996.1 208.7 1000.9 215 1003.9 222C1007 228.9 1009.1 237.1 1010.6 243.7C1012 250.2 1012.4 255.6 1012.7 261.2C1013 266.9 1012.8 271.5 1012.3 277.6C1011.9 283.6 1011 290 1009.7 297.6C1008.4 305.2 1006.2 315.1 1004.5 323.3C1002.8 331.5 1001.3 339.1 999.6 346.9" stroke="#000" stroke-width="1.3" stroke-dasharray="3 2"/>
<path d="M996.1 201.3C1000 207.4 1004.7 213 1007.8 219.7C1010.8 226.3 1012.9 234.5 1014.4 241.3C1015.9 248.2 1016.5 254.2 1016.8 260.5C1017.1 266.8 1016.9 272.7 1016.4 279.1C1015.8 285.6 1015 291.7 1013.6 299.1C1012.2 306.5 1009.9 315.7 1008 323.3C1006 330.9 1004 337.5 1001.9 344.7" stroke="#000" stroke-width="1.3" stroke-dasharray="3 2"/>
<path d="M999.2 350C997.1 360 994.5 369.6 993 380C991.5 390.4 991.1 400.5 990 412.2C988.9 423.9 987.3 437.9 986.5 450C985.7 462.1 985.3 464.1 985.3 484.5C985.3 504.9 986.1 543.1 986.5 572.4" stroke="#000" stroke-width="1.7"/>
<path d="M1289.5 201.1C1303 222.4 1317 244 1330 265C1343 286 1352.8 301.2 1367.8 327C1382.8 352.8 1401.8 386.7 1420 420C1438.2 453.3 1458 491.3 1477 527" stroke="#000" stroke-width="1.7"/>
<path d="M1296 211C1308.7 231.3 1320.8 250.5 1334 272C1347.2 293.5 1360.3 314.3 1375 340C1389.7 365.7 1408.1 400.7 1422 426C1435.9 451.3 1446.3 469.9 1458.5 491.9" stroke="#000" stroke-width="1.0"/>
<path d="M1477 527C1473 533 1470.5 539.5 1465 545C1459.5 550.5 1451.6 555.9 1444 560C1436.4 564.1 1427.7 566.4 1419.6 569.6" stroke="#000" stroke-width="1.7"/>
<path d="M1419.6 569.6L1397.4 530.7" stroke="#000" stroke-width="1.7"/>
<path d="M1397.4 530.7C1381.6 505.5 1364.6 477.6 1350 455C1335.4 432.4 1321 409.7 1310 395C1299 380.3 1292.8 376.1 1284.2 366.7" stroke="#000" stroke-width="1.3"/>
<path d="M1458.5 491.9L1397.4 530.7" stroke="#000" stroke-width="1.2"/>
<path d="M1466 504.8L1403 543.7" stroke="#555" stroke-width="0.9"/>
<path d="M1461 496.2L1399.3 535" stroke="#000" stroke-width="1.2" stroke-dasharray="2.6 1.7"/>
<path d="M1463.5 500.5L1401.2 539.3" stroke="#000" stroke-width="1.2" stroke-dasharray="2.6 1.7"/>
<path d="M1272.1 276.5L1281.8 291.1L1291.3 305.7L1300.9 320.2L1310.6 335L1320.5 350.3L1330.8 366.3L1341.5 383.1L1352.4 400.3L1363.2 417.4L1373.7 434L1383.6 449.6L1393 464.4L1402 478.5L1410.8 492.3L1419.5 506.1L1428.4 520" stroke="#000" stroke-width="1.2"/>
<path d="M1264.5 281.5L1274.1 296.2L1283.6 310.7L1293.2 325.3L1302.9 340.1L1312.8 355.3L1323 371.2L1333.7 388L1344.6 405.2L1355.4 422.3L1365.9 438.9L1375.9 454.6L1385.2 469.3L1394.2 483.4L1403 497.2L1411.7 511L1420.6 525" stroke="#000" stroke-width="1.2"/>
<path d="M1270.2 277.7L1279.8 292.4L1289.4 306.9L1299 321.5L1308.7 336.3L1318.6 351.5L1328.8 367.5L1339.5 384.3L1350.4 401.5L1361.3 418.6L1371.8 435.2L1381.7 450.9L1391 465.6L1400 479.7L1408.8 493.5L1417.6 507.3L1426.4 521.3" stroke="#000" stroke-width="1.3" stroke-dasharray="3 2"/>
<path d="M1266.4 280.3L1276 294.9L1285.6 309.4L1295.1 324L1304.8 338.8L1314.7 354L1325 370L1335.6 386.8L1346.5 403.9L1357.4 421.1L1367.9 437.7L1377.8 453.3L1387.2 468.1L1396.1 482.2L1404.9 496L1413.7 509.8L1422.6 523.7" stroke="#000" stroke-width="1.3" stroke-dasharray="3 2"/>
<path d="M1291 204.5C1294.7 210.3 1298.5 215.8 1302 222C1305.5 228.2 1309.3 234.8 1312 242C1314.7 249.2 1316 257.3 1318 265" stroke="#000" stroke-width="0.9"/>
<path d="M1277 330C1278 335 1279.2 341.3 1280 345C1280.8 348.7 1280.8 349.2 1282 352C1283.2 354.8 1285.3 358.7 1287 362" stroke="#000" stroke-width="0.8"/>
<path d="M1203.3 152.2C1218.9 160.8 1235.7 169.8 1250 178C1264.3 186.2 1275.9 193.4 1288.9 201.1" stroke="#000" stroke-width="1.6"/>
<path d="M1196.1 152.2L1282.6 200.2" stroke="#000" stroke-width="1.2"/>
<path d="M1191.9 159.8L1278.4 207.8" stroke="#000" stroke-width="1.2"/>
<path d="M1195 154.1L1281.5 202.1" stroke="#000" stroke-width="1.3" stroke-dasharray="3 2"/>
<path d="M1193 157.9L1279.5 205.9" stroke="#000" stroke-width="1.3" stroke-dasharray="3 2"/>
<path d="M1290 202.5C1286.1 209.4 1281.3 216.2 1278.3 223.3C1275.2 230.4 1273.1 238.6 1271.7 245C1270.3 251.4 1270 256.4 1269.7 261.7C1269.4 267 1269.5 270.9 1270 276.7C1270.5 282.5 1271.2 288.9 1272.5 296.7C1273.8 304.5 1276 314.7 1277.5 323.3C1279 331.9 1280.6 341.1 1281.7 348.3C1282.8 355.5 1283.4 360.6 1284.2 366.7" stroke="#000" stroke-width="1.3"/>
<path d="M1281.7 200.8C1277.8 206.6 1273.1 211.8 1270 218.3C1266.9 224.8 1264.8 233.1 1263.3 240C1261.8 246.9 1261.1 253.3 1260.8 260C1260.5 266.7 1260.7 273.3 1261.3 280C1261.9 286.7 1262.8 292.8 1264.2 300C1265.7 307.2 1267.9 316.1 1270 323.3C1272.1 330.5 1274.9 338.9 1276.7 343.3C1278.5 347.8 1279.4 347.8 1280.8 350" stroke="#000" stroke-width="1.2"/>
<path d="M1287.8 202C1283.9 208.7 1279.1 215 1276.1 222C1273 228.9 1270.9 237.1 1269.4 243.7C1268 250.2 1267.6 255.6 1267.3 261.2C1267 266.9 1267.2 271.5 1267.7 277.6C1268.1 283.6 1269 290 1270.3 297.6C1271.6 305.2 1273.8 315.1 1275.5 323.3C1277.2 331.5 1278.7 339.1 1280.3 346.9" stroke="#000" stroke-width="1.3" stroke-dasharray="3 2"/>
<path d="M1283.9 201.3C1280 207.4 1275.3 213 1272.2 219.7C1269.2 226.3 1267.1 234.5 1265.6 241.3C1264.1 248.2 1263.5 254.2 1263.2 260.5C1262.9 266.8 1263.1 272.7 1263.6 279.1C1264.2 285.6 1265 291.7 1266.4 299.1C1267.8 306.5 1270.1 315.7 1272 323.3C1274 330.9 1276 337.5 1278.1 344.7" stroke="#000" stroke-width="1.3" stroke-dasharray="3 2"/>
<path d="M1280.8 350C1282.9 360 1285.5 369.6 1287 380C1288.5 390.4 1288.9 400.5 1290 412.2C1291.1 423.9 1292.7 437.9 1293.5 450C1294.3 462.1 1294.7 464.1 1294.7 484.5C1294.7 504.9 1293.9 543.1 1293.5 572.4" stroke="#000" stroke-width="1.7"/>
<path d="M1090 126.7C1098.3 126.3 1106.7 125.7 1115 125.4C1123.3 125.1 1131.3 125 1140 125C1148.7 125 1157.9 125 1167 125.5C1176.1 126 1185.3 127 1194.4 127.8" stroke="#000" stroke-width="1.7"/>
<path d="M1090 126.700L1076.700 152.200L1079 152.500Z M1194.400 127.800L1206.700 152.200L1204.500 152.700Z" fill="#000" stroke="#000" stroke-width="1.2"/>
<path d="M1083.8 151.7L1088.6 151.5L1093.4 151.3L1098.2 151.1L1103.1 150.9L1108.1 150.8L1113.4 150.6L1119 150.5L1124.7 150.4L1130.4 150.3L1136.2 150.2L1141.9 150.2L1147.6 150.2L1153.3 150.3L1159 150.4L1164.6 150.5L1170.2 150.7L1175.6 150.9L1180.9 151.2L1186.1 151.5L1191.3 151.8L1196.5 152.1L1198.2 152.2" stroke="#000" stroke-width="1.2"/>
<path d="M1084.2 160.3L1089 160.1L1093.8 159.9L1098.5 159.7L1103.4 159.5L1108.4 159.3L1113.7 159.2L1119.2 159.1L1124.8 159L1130.5 158.9L1136.2 158.8L1141.9 158.8L1147.5 158.8L1153.2 158.9L1158.8 159L1164.4 159.1L1169.8 159.3L1175.2 159.5L1180.4 159.8L1185.6 160.1L1190.8 160.4L1196 160.7L1197.8 160.8" stroke="#000" stroke-width="1.2"/>
<path d="M1083.9 153.9L1088.7 153.7L1093.5 153.5L1098.3 153.3L1103.1 153.1L1108.2 152.9L1113.5 152.8L1119 152.6L1124.7 152.5L1130.5 152.4L1136.2 152.4L1141.9 152.4L1147.6 152.4L1153.3 152.4L1158.9 152.5L1164.6 152.7L1170.1 152.9L1175.5 153.1L1180.8 153.3L1186 153.6L1191.2 154L1196.4 154.3L1198.1 154.4" stroke="#000" stroke-width="1.3" stroke-dasharray="3 2"/>
<path d="M1084.1 158.1L1088.9 158L1093.7 157.8L1098.4 157.6L1103.3 157.4L1108.3 157.2L1113.6 157.1L1119.1 156.9L1124.8 156.8L1130.5 156.7L1136.2 156.7L1141.9 156.7L1147.5 156.7L1153.2 156.7L1158.9 156.8L1164.4 157L1169.9 157.1L1175.3 157.4L1180.5 157.6L1185.7 157.9L1190.9 158.2L1196.1 158.6L1197.9 158.6" stroke="#000" stroke-width="1.3" stroke-dasharray="3 2"/>
<path d="M1146.2 151L1146.2 267.8" stroke="#000" stroke-width="1.2"/>
<path d="M1136.8 151L1136.8 267.8" stroke="#000" stroke-width="1.2"/>
<path d="M1143.8 151L1143.8 267.8" stroke="#000" stroke-width="1.3" stroke-dasharray="3 2"/>
<path d="M1139.2 151L1139.2 267.8" stroke="#000" stroke-width="1.3" stroke-dasharray="3 2"/>
<path d="M1010.7 260.1L1268.9 260.1" stroke="#000" stroke-width="1.4"/>
<path d="M1010.7 268.9L1268.9 268.9" stroke="#000" stroke-width="1.4"/>
<path d="M1010.7 262.3L1268.9 262.3" stroke="#000" stroke-width="1.3" stroke-dasharray="3 2"/>
<path d="M1010.7 266.7L1268.9 266.7" stroke="#000" stroke-width="1.3" stroke-dasharray="3 2"/>
<path d="M1105.6 260L1105.6 579" stroke="#000" stroke-width="1.3"/>
<path d="M1095.2 260L1095.2 579" stroke="#000" stroke-width="1.3"/>
<path d="M1103 260L1103 579" stroke="#000" stroke-width="1.3" stroke-dasharray="3 2"/>
<path d="M1097.8 260L1097.8 579" stroke="#000" stroke-width="1.3" stroke-dasharray="3 2"/>
<path d="M1193.2 260L1193.2 579" stroke="#000" stroke-width="1.3"/>
<path d="M1183.2 260L1183.2 579" stroke="#000" stroke-width="1.3"/>
<path d="M1190.7 260L1190.7 579" stroke="#000" stroke-width="1.3" stroke-dasharray="3 2"/>
<path d="M1185.7 260L1185.7 579" stroke="#000" stroke-width="1.3" stroke-dasharray="3 2"/>
<path d="M986.5 572.4C1011 574.3 1034.3 576.7 1060 578C1085.7 579.3 1113.9 580.3 1140.6 580.3C1167.3 580.3 1194.3 579.2 1220 578C1245.7 576.8 1269.8 574.7 1294.7 573.1" stroke="#000" stroke-width="1.8"/>
<path d="M987.7 562.7C1011.8 564.7 1034.5 567.3 1060 568.7C1085.5 570.1 1113.9 571.2 1140.6 571.2C1167.3 571.2 1194.5 570.3 1220 569C1245.5 567.7 1269 565.3 1293.5 563.5" stroke="#000" stroke-width="1.2"/>
<path d="M987.5 566C1011.7 568 1034.5 570.6 1060 572C1085.5 573.4 1113.9 574.4 1140.6 574.4C1167.3 574.4 1194.5 573.5 1220 572.2C1245.5 570.9 1269.1 568.6 1293.7 566.8" stroke="#000" stroke-width="1.25" stroke-dasharray="3 2"/>
<path d="M987.3 569.3C1011.5 571.3 1034.5 573.8 1060 575.2C1085.5 576.6 1113.9 577.5 1140.6 577.5C1167.3 577.5 1194.4 576.5 1220 575.3C1245.6 574 1269.3 571.8 1294 570" stroke="#000" stroke-width="1.25" stroke-dasharray="3 2"/>
</g>
</svg>

</body>
</html>
